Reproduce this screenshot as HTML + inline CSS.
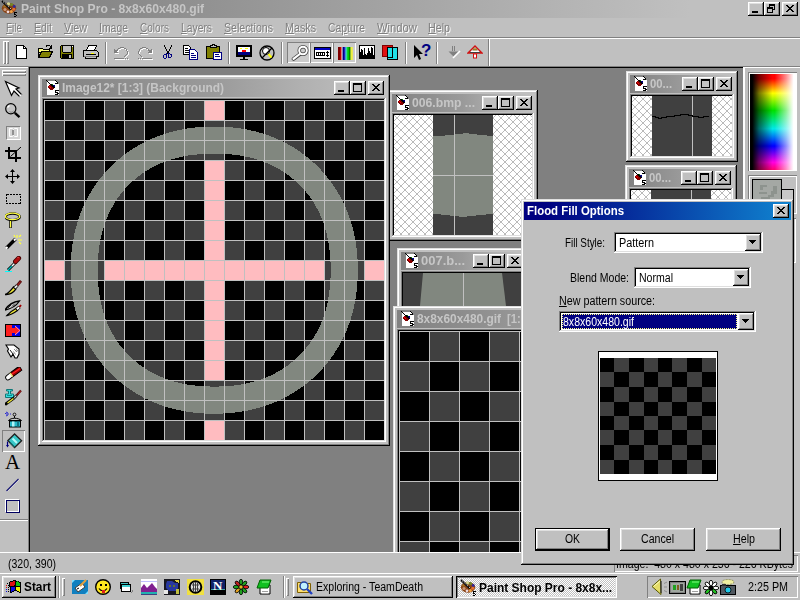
<!DOCTYPE html>
<html><head><meta charset="utf-8"><title>Paint Shop Pro</title>
<style>
html,body{margin:0;padding:0}
body{width:800px;height:600px;overflow:hidden;background:#c0c0c0;position:relative;font-family:"Liberation Sans",sans-serif;font-size:11px;color:#000}
div,span,svg{position:absolute;box-sizing:border-box}
.t{white-space:nowrap;line-height:13px;font-size:11px}
.b{font-weight:bold}
.dis{color:#808080;text-shadow:1px 1px 0 #fff}
u{text-decoration:underline}
</style></head><body>
<div style="left:0px;top:0px;width:800px;height:18px;background:linear-gradient(to right,#808080 0,#828282 40px,#c0c0c0 690px,#c0c0c0 800px)"></div>
<span class="t" style="left:21px;top:2px;font-size:12px;line-height:14px;font-weight:bold;transform-origin:0 0;transform:scaleX(1.0092);color:#c6c6c6">Paint Shop Pro - 8x8x60x480.gif</span>
<svg style="left:0px;top:0px" width="18" height="17" viewBox="0 0 18 17" shape-rendering="crispEdges" ><g shape-rendering="auto"><ellipse cx="9" cy="8.300" rx="7.200" ry="5.400" fill="#8a4416"/><circle cx="8.500" cy="4" r="1.700" fill="#d8d890"/><circle cx="11.500" cy="4.500" r="1.600" fill="#708828"/><circle cx="14.200" cy="6.500" r="1.400" fill="#3028a0"/><circle cx="13.800" cy="9.300" r="1.500" fill="#e87030"/><circle cx="11.300" cy="11.500" r="1.500" fill="#f0a040"/><circle cx="8" cy="11.800" r="1.400" fill="#f0dce0"/><circle cx="5" cy="9.500" r="1.600" fill="#c89878"/><circle cx="4.500" cy="6.500" r="1.300" fill="#a07020"/><path d="M2 1L11 9.500" stroke="#000" stroke-width="1.800"/><path d="M3 1.500L11.500 9.500" stroke="#fff" stroke-width="0.900" stroke-dasharray="1.200 1.200"/></g><rect x="14" y="12" width="3" height="1" fill="#000"/><rect x="14" y="13" width="1" height="1" fill="#000"/><rect x="14" y="14" width="2" height="1" fill="#000"/><rect x="16" y="15" width="1" height="1" fill="#000"/><rect x="14" y="16" width="2" height="1" fill="#000"/></svg>
<div style="left:748px;top:2px;width:16px;height:14px;background:#c0c0c0;box-shadow:inset -1px -1px 0 #000,inset 1px 1px 0 #fff,inset -2px -2px 0 #808080,inset 2px 2px 0 #dfdfdf"><div style="left:4px;top:9px;width:6px;height:2px;background:#000"></div></div>
<div style="left:764px;top:2px;width:16px;height:14px;background:#c0c0c0;box-shadow:inset -1px -1px 0 #000,inset 1px 1px 0 #fff,inset -2px -2px 0 #808080,inset 2px 2px 0 #dfdfdf"><div style="left:5px;top:2px;width:6px;height:6px;border:1px solid #000;border-top:2px solid #000"></div><div style="left:3px;top:5px;width:6px;height:6px;border:1px solid #000;border-top:2px solid #000;background:#c0c0c0"></div></div>
<div style="left:782px;top:2px;width:16px;height:14px;background:#c0c0c0;box-shadow:inset -1px -1px 0 #000,inset 1px 1px 0 #fff,inset -2px -2px 0 #808080,inset 2px 2px 0 #dfdfdf"><svg style="left:4px;top:3px" width="8" height="7" viewBox="0 0 8 7" shape-rendering="crispEdges" ><path d="M0 0h2v1h-2zM6 0h2v1h-2zM1 1h2v1h-2zM5 1h2v1h-2zM2 2h4v1h-4zM3 3h2v1h-2zM2 4h4v1h-4zM1 5h2v1h-2zM5 5h2v1h-2zM0 6h2v1h-2zM6 6h2v1h-2z" fill="#000"/></svg></div>
<span class="t dis" style="left:6px;top:21px;font-size:12px;line-height:14px;transform-origin:0 0;transform:scaleX(0.8271);"><u>F</u>ile</span>
<span class="t dis" style="left:34px;top:21px;font-size:12px;line-height:14px;transform-origin:0 0;transform:scaleX(0.8707);"><u>E</u>dit</span>
<span class="t dis" style="left:64px;top:21px;font-size:12px;line-height:14px;transform-origin:0 0;transform:scaleX(0.8916);"><u>V</u>iew</span>
<span class="t dis" style="left:99px;top:21px;font-size:12px;line-height:14px;transform-origin:0 0;transform:scaleX(0.8697);"><u>I</u>mage</span>
<span class="t dis" style="left:140px;top:21px;font-size:12px;line-height:14px;transform-origin:0 0;transform:scaleX(0.8360);"><u>C</u>olors</span>
<span class="t dis" style="left:181px;top:21px;font-size:12px;line-height:14px;transform-origin:0 0;transform:scaleX(0.8607);"><u>L</u>ayers</span>
<span class="t dis" style="left:224px;top:21px;font-size:12px;line-height:14px;transform-origin:0 0;transform:scaleX(0.8851);"><u>S</u>elections</span>
<span class="t dis" style="left:285px;top:21px;font-size:12px;line-height:14px;transform-origin:0 0;transform:scaleX(0.8941);"><u>M</u>asks</span>
<span class="t dis" style="left:328px;top:21px;font-size:12px;line-height:14px;transform-origin:0 0;transform:scaleX(0.8668);">Ca<u>p</u>ture</span>
<span class="t dis" style="left:377px;top:21px;font-size:12px;line-height:14px;transform-origin:0 0;transform:scaleX(0.9370);"><u>W</u>indow</span>
<span class="t dis" style="left:428px;top:21px;font-size:12px;line-height:14px;transform-origin:0 0;transform:scaleX(0.8911);"><u>H</u>elp</span>
<div style="left:0px;top:37px;width:800px;height:1px;background:#808080"></div>
<div style="left:0px;top:38px;width:800px;height:1px;background:#fff"></div>
<div style="left:3px;top:41px;width:3px;height:23px;background:#c0c0c0;box-shadow:inset 1px 1px 0 #fff,inset -1px -1px 0 #808080"></div>
<div style="left:6px;top:41px;width:3px;height:23px;background:#c0c0c0;box-shadow:inset 1px 1px 0 #fff,inset -1px -1px 0 #808080"></div>
<svg style="left:16px;top:45px" width="12" height="14" viewBox="0 0 12 14" shape-rendering="crispEdges" ><path d="M0.5 0.5h7l3 3v9.5h-10z" fill="#fff" stroke="#000"/><path d="M7.5 0.5v3h3" fill="none" stroke="#000"/></svg><svg style="left:37px;top:44px" width="16" height="15" viewBox="0 0 16 15" shape-rendering="crispEdges" ><path d="M1 4h4l1 1h6v3h-11z" fill="#ffff80" stroke="#000" stroke-width="1"/><path d="M1.5 13.5l3-6h11l-3 6z" fill="#808000" stroke="#000"/><path d="M1.5 13.5v-9" stroke="#000"/><path d="M9 2.5c2-2 4-2 5 1M14.5 1v3h-3" fill="none" stroke="#000"/></svg><svg style="left:60px;top:45px" width="14" height="14" viewBox="0 0 14 14" shape-rendering="crispEdges" ><rect x="1" y="0" width="13" height="1" fill="#000"/><rect x="0" y="1" width="1" height="1" fill="#000"/><rect x="1" y="1" width="1" height="1" fill="#808000"/><rect x="2" y="1" width="1" height="1" fill="#000"/><rect x="3" y="1" width="8" height="1" fill="#c0c0c0"/><rect x="11" y="1" width="1" height="1" fill="#000"/><rect x="12" y="1" width="1" height="1" fill="#fff"/><rect x="13" y="1" width="1" height="1" fill="#000"/><rect x="0" y="2" width="1" height="1" fill="#000"/><rect x="1" y="2" width="1" height="1" fill="#808000"/><rect x="2" y="2" width="1" height="1" fill="#000"/><rect x="3" y="2" width="8" height="1" fill="#c0c0c0"/><rect x="11" y="2" width="1" height="1" fill="#000"/><rect x="12" y="2" width="1" height="1" fill="#808000"/><rect x="13" y="2" width="1" height="1" fill="#000"/><rect x="0" y="3" width="1" height="1" fill="#000"/><rect x="1" y="3" width="1" height="1" fill="#808000"/><rect x="2" y="3" width="1" height="1" fill="#000"/><rect x="3" y="3" width="8" height="1" fill="#c0c0c0"/><rect x="11" y="3" width="1" height="1" fill="#000"/><rect x="12" y="3" width="1" height="1" fill="#808000"/><rect x="13" y="3" width="1" height="1" fill="#000"/><rect x="0" y="4" width="1" height="1" fill="#000"/><rect x="1" y="4" width="1" height="1" fill="#808000"/><rect x="2" y="4" width="1" height="1" fill="#000"/><rect x="3" y="4" width="8" height="1" fill="#c0c0c0"/><rect x="11" y="4" width="1" height="1" fill="#000"/><rect x="12" y="4" width="1" height="1" fill="#808000"/><rect x="13" y="4" width="1" height="1" fill="#000"/><rect x="0" y="5" width="1" height="1" fill="#000"/><rect x="1" y="5" width="1" height="1" fill="#808000"/><rect x="2" y="5" width="1" height="1" fill="#000"/><rect x="3" y="5" width="8" height="1" fill="#c0c0c0"/><rect x="11" y="5" width="1" height="1" fill="#000"/><rect x="12" y="5" width="1" height="1" fill="#808000"/><rect x="13" y="5" width="1" height="1" fill="#000"/><rect x="0" y="6" width="1" height="1" fill="#000"/><rect x="1" y="6" width="1" height="1" fill="#808000"/><rect x="2" y="6" width="1" height="1" fill="#000"/><rect x="3" y="6" width="8" height="1" fill="#c0c0c0"/><rect x="11" y="6" width="1" height="1" fill="#000"/><rect x="12" y="6" width="1" height="1" fill="#808000"/><rect x="13" y="6" width="1" height="1" fill="#000"/><rect x="0" y="7" width="1" height="1" fill="#000"/><rect x="1" y="7" width="2" height="1" fill="#808000"/><rect x="3" y="7" width="8" height="1" fill="#000"/><rect x="11" y="7" width="2" height="1" fill="#808000"/><rect x="13" y="7" width="1" height="1" fill="#000"/><rect x="0" y="8" width="1" height="1" fill="#000"/><rect x="1" y="8" width="12" height="1" fill="#808000"/><rect x="13" y="8" width="1" height="1" fill="#000"/><rect x="0" y="9" width="1" height="1" fill="#000"/><rect x="1" y="9" width="1" height="1" fill="#808000"/><rect x="2" y="9" width="10" height="1" fill="#000"/><rect x="12" y="9" width="1" height="1" fill="#808000"/><rect x="13" y="9" width="1" height="1" fill="#000"/><rect x="0" y="10" width="1" height="1" fill="#000"/><rect x="1" y="10" width="1" height="1" fill="#808000"/><rect x="2" y="10" width="7" height="1" fill="#000"/><rect x="9" y="10" width="2" height="1" fill="#c0c0c0"/><rect x="11" y="10" width="1" height="1" fill="#000"/><rect x="12" y="10" width="1" height="1" fill="#808000"/><rect x="13" y="10" width="1" height="1" fill="#000"/><rect x="0" y="11" width="1" height="1" fill="#000"/><rect x="1" y="11" width="1" height="1" fill="#808000"/><rect x="2" y="11" width="7" height="1" fill="#000"/><rect x="9" y="11" width="2" height="1" fill="#c0c0c0"/><rect x="11" y="11" width="1" height="1" fill="#000"/><rect x="12" y="11" width="1" height="1" fill="#808000"/><rect x="13" y="11" width="1" height="1" fill="#000"/><rect x="0" y="12" width="1" height="1" fill="#000"/><rect x="1" y="12" width="1" height="1" fill="#808000"/><rect x="2" y="12" width="7" height="1" fill="#000"/><rect x="9" y="12" width="2" height="1" fill="#c0c0c0"/><rect x="11" y="12" width="1" height="1" fill="#000"/><rect x="12" y="12" width="1" height="1" fill="#808000"/><rect x="13" y="12" width="1" height="1" fill="#000"/><rect x="1" y="13" width="13" height="1" fill="#000"/></svg><svg style="left:82px;top:45px" width="17" height="14" viewBox="0 0 17 14" shape-rendering="crispEdges" ><path d="M4.5 5.5l2-5h8l-2 5z" fill="#fff" stroke="#000"/><path d="M1.5 5.5h13l2 2v4h-2v2h-11v-2h-2z" fill="#c0c0c0" stroke="#000"/><path d="M3.5 9.5h10" stroke="#000"/><rect x="9" y="8" width="3" height="1" fill="#ffff00"/><path d="M2 11.5h12" stroke="#808080"/></svg><div style="left:105px;top:42px;width:1px;height:22px;background:#808080"></div><div style="left:106px;top:42px;width:1px;height:22px;background:#fff"></div><svg style="left:114px;top:47px" width="16" height="14" viewBox="0 0 16 14" shape-rendering="crispEdges" ><rect x="7" y="1" width="4" height="1" fill="#fff"/><rect x="5" y="2" width="2" height="1" fill="#fff"/><rect x="11" y="2" width="2" height="1" fill="#fff"/><rect x="1" y="3" width="1" height="1" fill="#fff"/><rect x="4" y="3" width="1" height="1" fill="#fff"/><rect x="13" y="3" width="1" height="1" fill="#fff"/><rect x="1" y="4" width="4" height="1" fill="#fff"/><rect x="13" y="4" width="1" height="1" fill="#fff"/><rect x="1" y="5" width="3" height="1" fill="#fff"/><rect x="14" y="5" width="1" height="1" fill="#fff"/><rect x="1" y="6" width="4" height="1" fill="#fff"/><rect x="14" y="6" width="1" height="1" fill="#fff"/><rect x="14" y="7" width="1" height="1" fill="#fff"/><rect x="13" y="8" width="1" height="1" fill="#fff"/><rect x="12" y="9" width="1" height="1" fill="#fff"/><rect x="11" y="10" width="1" height="1" fill="#fff"/><rect x="1" y="12" width="10" height="1" fill="#fff"/><rect x="12" y="12" width="1" height="1" fill="#fff"/><rect x="14" y="12" width="1" height="1" fill="#fff"/><rect x="6" y="0" width="4" height="1" fill="#808080"/><rect x="4" y="1" width="2" height="1" fill="#808080"/><rect x="10" y="1" width="2" height="1" fill="#808080"/><rect x="0" y="2" width="1" height="1" fill="#808080"/><rect x="3" y="2" width="1" height="1" fill="#808080"/><rect x="12" y="2" width="1" height="1" fill="#808080"/><rect x="0" y="3" width="4" height="1" fill="#808080"/><rect x="12" y="3" width="1" height="1" fill="#808080"/><rect x="0" y="4" width="3" height="1" fill="#808080"/><rect x="13" y="4" width="1" height="1" fill="#808080"/><rect x="0" y="5" width="4" height="1" fill="#808080"/><rect x="13" y="5" width="1" height="1" fill="#808080"/><rect x="13" y="6" width="1" height="1" fill="#808080"/><rect x="12" y="7" width="1" height="1" fill="#808080"/><rect x="11" y="8" width="1" height="1" fill="#808080"/><rect x="10" y="9" width="1" height="1" fill="#808080"/><rect x="0" y="11" width="10" height="1" fill="#808080"/><rect x="11" y="11" width="1" height="1" fill="#808080"/><rect x="13" y="11" width="1" height="1" fill="#808080"/></svg><svg style="left:138px;top:47px" width="16" height="14" viewBox="0 0 16 14" shape-rendering="crispEdges" ><rect x="5" y="1" width="4" height="1" fill="#fff"/><rect x="3" y="2" width="2" height="1" fill="#fff"/><rect x="9" y="2" width="2" height="1" fill="#fff"/><rect x="2" y="3" width="1" height="1" fill="#fff"/><rect x="11" y="3" width="1" height="1" fill="#fff"/><rect x="14" y="3" width="1" height="1" fill="#fff"/><rect x="2" y="4" width="1" height="1" fill="#fff"/><rect x="11" y="4" width="4" height="1" fill="#fff"/><rect x="1" y="5" width="1" height="1" fill="#fff"/><rect x="12" y="5" width="3" height="1" fill="#fff"/><rect x="1" y="6" width="1" height="1" fill="#fff"/><rect x="11" y="6" width="4" height="1" fill="#fff"/><rect x="1" y="7" width="1" height="1" fill="#fff"/><rect x="2" y="8" width="1" height="1" fill="#fff"/><rect x="3" y="9" width="1" height="1" fill="#fff"/><rect x="4" y="10" width="1" height="1" fill="#fff"/><rect x="1" y="12" width="1" height="1" fill="#fff"/><rect x="3" y="12" width="1" height="1" fill="#fff"/><rect x="5" y="12" width="10" height="1" fill="#fff"/><rect x="4" y="0" width="4" height="1" fill="#808080"/><rect x="2" y="1" width="2" height="1" fill="#808080"/><rect x="8" y="1" width="2" height="1" fill="#808080"/><rect x="1" y="2" width="1" height="1" fill="#808080"/><rect x="10" y="2" width="1" height="1" fill="#808080"/><rect x="13" y="2" width="1" height="1" fill="#808080"/><rect x="1" y="3" width="1" height="1" fill="#808080"/><rect x="10" y="3" width="4" height="1" fill="#808080"/><rect x="0" y="4" width="1" height="1" fill="#808080"/><rect x="11" y="4" width="3" height="1" fill="#808080"/><rect x="0" y="5" width="1" height="1" fill="#808080"/><rect x="10" y="5" width="4" height="1" fill="#808080"/><rect x="0" y="6" width="1" height="1" fill="#808080"/><rect x="1" y="7" width="1" height="1" fill="#808080"/><rect x="2" y="8" width="1" height="1" fill="#808080"/><rect x="3" y="9" width="1" height="1" fill="#808080"/><rect x="0" y="11" width="1" height="1" fill="#808080"/><rect x="2" y="11" width="1" height="1" fill="#808080"/><rect x="4" y="11" width="10" height="1" fill="#808080"/></svg><svg style="left:163px;top:45px" width="10" height="14" viewBox="0 0 10 14" shape-rendering="crispEdges" ><rect x="1" y="0" width="1" height="1" fill="#000"/><rect x="8" y="0" width="1" height="1" fill="#000"/><rect x="1" y="1" width="1" height="1" fill="#000"/><rect x="8" y="1" width="1" height="1" fill="#000"/><rect x="2" y="2" width="1" height="1" fill="#000"/><rect x="7" y="2" width="1" height="1" fill="#000"/><rect x="2" y="3" width="1" height="1" fill="#000"/><rect x="7" y="3" width="1" height="1" fill="#000"/><rect x="3" y="4" width="1" height="1" fill="#000"/><rect x="6" y="4" width="1" height="1" fill="#000"/><rect x="3" y="5" width="1" height="1" fill="#000"/><rect x="6" y="5" width="1" height="1" fill="#000"/><rect x="4" y="6" width="2" height="1" fill="#000"/><rect x="4" y="7" width="2" height="1" fill="#000"/><rect x="3" y="8" width="1" height="1" fill="#000080"/><rect x="4" y="8" width="1" height="1" fill="#000"/><rect x="5" y="8" width="2" height="1" fill="#000080"/><rect x="1" y="9" width="3" height="1" fill="#000080"/><rect x="5" y="9" width="1" height="1" fill="#000080"/><rect x="7" y="9" width="2" height="1" fill="#000080"/><rect x="0" y="10" width="1" height="1" fill="#000080"/><rect x="3" y="10" width="1" height="1" fill="#000080"/><rect x="5" y="10" width="1" height="1" fill="#000080"/><rect x="8" y="10" width="1" height="1" fill="#000080"/><rect x="0" y="11" width="1" height="1" fill="#000080"/><rect x="3" y="11" width="1" height="1" fill="#000080"/><rect x="5" y="11" width="1" height="1" fill="#000080"/><rect x="8" y="11" width="1" height="1" fill="#000080"/><rect x="0" y="12" width="1" height="1" fill="#000080"/><rect x="3" y="12" width="1" height="1" fill="#000080"/><rect x="5" y="12" width="3" height="1" fill="#000080"/><rect x="1" y="13" width="2" height="1" fill="#000080"/></svg><svg style="left:183px;top:45px" width="16" height="15" viewBox="0 0 16 15" shape-rendering="crispEdges" ><path d="M0.5 0.5h5l2 2v7h-7z" fill="#fff" stroke="#000"/><path d="M2 3.5h3M2 5.5h4M2 7.5h4" stroke="#000"/><path d="M6.500 4.500h5l3 3v6.500h-8z" fill="#fff" stroke="#000080"/><path d="M8 8.500h3M8 10.500h5M8 12.500h5" stroke="#000080"/></svg><svg style="left:206px;top:44px" width="16" height="16" viewBox="0 0 16 16" shape-rendering="crispEdges" ><rect x="0.5" y="2.5" width="13" height="12" fill="#808000" stroke="#000"/><path d="M4 3.500h6v-2h-2v-1h-2v1h-2z" fill="#c0c0c0" stroke="#000"/><rect x="7.500" y="8.500" width="8" height="6.500" fill="#fff" stroke="#000080"/><path d="M9 10.500h4M9 12.500h5" stroke="#000080"/></svg><div style="left:228px;top:42px;width:1px;height:22px;background:#808080"></div><div style="left:229px;top:42px;width:1px;height:22px;background:#fff"></div><svg style="left:236px;top:45px" width="17" height="16" viewBox="0 0 17 16" shape-rendering="crispEdges" ><rect x="0.5" y="0.5" width="15" height="11" fill="#000" stroke="#000"/><rect x="2" y="2" width="12" height="5" fill="#fff"/><rect x="2" y="7" width="12" height="3" fill="#000080"/><rect x="6" y="5" width="4" height="2" fill="#ff0000"/><rect x="4" y="3" width="2" height="1" fill="#ffff00"/><rect x="9" y="3" width="3" height="1" fill="#ffff00"/><rect x="7" y="12" width="2" height="2" fill="#000"/><rect x="4" y="14" width="8" height="1" fill="#000"/></svg><svg style="left:259px;top:45px" width="17" height="16" viewBox="0 0 17 16" shape-rendering="crispEdges" ><circle cx="8" cy="8" r="7" fill="#c0c0c0" stroke="#000" stroke-width="1.3" shape-rendering="auto"/><circle cx="7" cy="6" r="3.500" fill="#fff" stroke="#000" shape-rendering="auto"/><path d="M9.500 9l3 3.500" stroke="#ffff00" stroke-width="2" shape-rendering="auto"/><path d="M3 13L13 3" stroke="#000" stroke-width="1.200" shape-rendering="auto"/></svg><div style="left:281px;top:42px;width:1px;height:22px;background:#808080"></div><div style="left:282px;top:42px;width:1px;height:22px;background:#fff"></div><div style="left:287px;top:42px;width:23px;height:21px;background:#cccccc;box-shadow:inset 1px 1px 0 #808080,inset -1px -1px 0 #fff"></div><div style="left:310px;top:42px;width:23px;height:21px;background:#cccccc;box-shadow:inset 1px 1px 0 #808080,inset -1px -1px 0 #fff"></div><div style="left:333px;top:42px;width:23px;height:21px;background:#cccccc;box-shadow:inset 1px 1px 0 #808080,inset -1px -1px 0 #fff"></div><svg style="left:291px;top:45px" width="18" height="16" viewBox="0 0 18 16" shape-rendering="crispEdges" ><g shape-rendering="auto"><path d="M8.500 9.500L2.500 14" stroke="#404040" stroke-width="3.600" stroke-linecap="round"/><circle cx="12" cy="5.500" r="3.800" fill="none" stroke="#404040" stroke-width="3.400"/><circle cx="12" cy="5.500" r="3.800" fill="none" stroke="#fff" stroke-width="2"/><path d="M8.800 9L2.500 13.800" stroke="#fff" stroke-width="2.200" stroke-linecap="round"/></g></svg><svg style="left:314px;top:47px" width="17" height="12" viewBox="0 0 17 12" shape-rendering="crispEdges" ><rect x="0.5" y="0.5" width="16" height="11" fill="#fff" stroke="#000"/><rect x="1" y="1" width="15" height="2" fill="#0000c0"/><rect x="2.500" y="5.500" width="8" height="3" fill="#fff" stroke="#000"/><rect x="4" y="6" width="1" height="2" fill="#000"/><rect x="6" y="6" width="1" height="2" fill="#000"/><rect x="8" y="6" width="1" height="2" fill="#000"/><path d="M13.500 4v6M12 5.500h3M12 8.500h3" stroke="#000"/></svg><svg style="left:338px;top:47px" width="15" height="13" viewBox="0 0 15 13" shape-rendering="crispEdges" ><g shape-rendering="auto"><rect x="0" y="0" width="2.3" height="13" fill="#800000"/><rect x="2" y="0" width="2.3" height="13" fill="#c00000"/><rect x="4" y="0" width="2.3" height="13" fill="#000080"/><rect x="6" y="0" width="1.8" height="13" fill="#2020c0"/><rect x="7.5" y="0" width="1.8" height="13" fill="#40e0e8"/><rect x="9" y="0" width="2.3" height="13" fill="#00c800"/><rect x="11" y="0" width="1.8" height="13" fill="#008000"/><rect x="12.5" y="0" width="2.3" height="13" fill="#f0f040"/><path d="M3.500 0l1 1l-1 1l1 1l-1 1l1 1l-1 1l1 1l-1 1l1 1l-1 1l1 1l-1 1l1 1" fill="none" stroke="#ffffff" stroke-width="1"/><path d="M8.500 0l1 1l-1 1l1 1l-1 1l1 1l-1 1l1 1l-1 1l1 1l-1 1l1 1l-1 1l1 1" fill="none" stroke="#20d060" stroke-width="1"/></g></svg><svg style="left:359px;top:45px" width="16" height="14" viewBox="0 0 16 14" shape-rendering="crispEdges" ><rect x="0" y="0" width="16" height="14" fill="#000"/><path d="M1 1h14v9h-1v-7h-1v-1h-1v6h-1v-2h-1v-3h-1v5h-1v2h-1v-1h-1v-6h-1v7h-1v-5h-1v-1h-1v3h-1z" fill="#fff"/></svg><svg style="left:382px;top:45px" width="17" height="17" viewBox="0 0 17 17" shape-rendering="crispEdges" ><rect x="0.5" y="0.5" width="10" height="11" fill="#e01010" stroke="#800000"/><rect x="5.500" y="2.500" width="10" height="12" fill="#20e0e8" stroke="#000"/><path d="M10.500 3v9h-5" stroke="#000" fill="none"/></svg><div style="left:405px;top:42px;width:1px;height:22px;background:#808080"></div><div style="left:406px;top:42px;width:1px;height:22px;background:#fff"></div><svg style="left:414px;top:45px" width="10" height="16" viewBox="0 0 10 16" shape-rendering="crispEdges" ><path d="M0 0v13l3-3l2 5l2-1l-2-5h4z" fill="#000" shape-rendering="auto"/></svg><span class="t" style="left:421px;top:42px;font-size:17px;line-height:18px;font-weight:bold;color:#000080">?</span><div style="left:436px;top:42px;width:1px;height:22px;background:#808080"></div><div style="left:437px;top:42px;width:1px;height:22px;background:#fff"></div><svg style="left:447px;top:46px" width="16" height="14" viewBox="0 0 16 14" shape-rendering="crispEdges" ><g shape-rendering="auto"><path d="M5.500 0v5M7.500 0v5" stroke="#808080"/><path d="M1.500 5.500h10l-5 5z" fill="#808080"/><path d="M6 12l7-7" stroke="#fff" stroke-width="1.600"/></g></svg><svg style="left:467px;top:45px" width="16" height="15" viewBox="0 0 16 15" shape-rendering="crispEdges" ><g shape-rendering="auto"><path d="M8 1l7 7h-14z" fill="#c0c0c0" stroke="#d01010" stroke-width="1.400"/><path d="M6 4.500h4" stroke="#a08020" stroke-width="2"/><path d="M4 6.500h8" stroke="#fff" stroke-width="1.400"/><path d="M3 7.500h10" stroke="#404040"/><rect x="6.500" y="9" width="3" height="4" fill="#fff" stroke="#d01010"/></g></svg><div style="left:488px;top:39px;width:1px;height:27px;background:#808080"></div><div style="left:489px;top:39px;width:1px;height:27px;background:#fff"></div>
<div style="left:0px;top:66px;width:800px;height:1px;background:#808080"></div>
<div style="left:0px;top:67px;width:29px;height:1px;background:#fff"></div>
<div style="left:2px;top:70px;width:24px;height:3px;background:#c0c0c0;box-shadow:inset 1px 1px 0 #fff,inset -1px -1px 0 #808080"></div>
<div style="left:2px;top:73px;width:24px;height:3px;background:#c0c0c0;box-shadow:inset 1px 1px 0 #fff,inset -1px -1px 0 #808080"></div>
<svg style="left:4px;top:80px" width="19" height="18" viewBox="0 0 19 18" shape-rendering="crispEdges" ><path d="M1.500 1.500L15 8L12 9L17.500 14.500L15.500 16.500L10 11L7.500 15.500Z" fill="#fff" stroke="#000" stroke-width="1.200" shape-rendering="auto"/><path d="M15.500 16.500l2-2" stroke="#fff" stroke-width="1.400" shape-rendering="auto"/></svg><svg style="left:5px;top:103px" width="16" height="17" viewBox="0 0 16 17" shape-rendering="crispEdges" ><circle cx="5.800" cy="5.700" r="5.100" fill="#c4c4c4" stroke="#000" stroke-width="1.200" shape-rendering="auto"/><path d="M2.500 4.500l2-2" stroke="#fff" stroke-width="1.200" shape-rendering="auto"/><path d="M4.500 8.500c1 1 3 1 4-0.500" stroke="#808080" fill="none" shape-rendering="auto"/><path d="M9.800 9.800l4.700 4.400" stroke="#000" stroke-width="2.400" shape-rendering="auto"/></svg><div style="left:6px;top:126px;width:15px;height:14px;border:1px solid #fff;border-top-color:#808080;border-left-color:#808080;background:#d4d4d4"></div><svg style="left:8px;top:128px" width="11" height="10" viewBox="0 0 11 10" shape-rendering="crispEdges" ><path d="M1.500 0.500h3l1 1l1-1h3v8h-3l-1-1l-1 1h-3z" fill="none" stroke="#fff" shape-rendering="auto"/><rect x="4" y="2" width="2" height="5" fill="#909090"/></svg><svg style="left:5px;top:147px" width="17" height="16" viewBox="0 0 17 16" shape-rendering="crispEdges" ><path d="M0 4h12M4 0v11M3 11h13M11 3v11.500" stroke="#000" stroke-width="2"/><path d="M5.500 9.500L16 0" stroke="#000" stroke-width="1" shape-rendering="auto"/></svg><svg style="left:5px;top:169px" width="16" height="16" viewBox="0 0 16 16" shape-rendering="crispEdges" ><path d="M7.500 1v13M1 7.500h13" stroke="#000" stroke-width="1.400"/><path d="M7.500 0l-2.500 3h5zM7.500 15l-2.500-3h5zM0 7.500l3-2.500v5zM15 7.500l-3-2.500v5z" fill="#000" shape-rendering="auto"/></svg><svg style="left:6px;top:194px" width="15" height="10" viewBox="0 0 15 10" shape-rendering="crispEdges" ><rect x="0.5" y="0.5" width="14" height="9" fill="none" stroke="#000" stroke-dasharray="2 1"/></svg><svg style="left:5px;top:212px" width="17" height="17" viewBox="0 0 17 17" shape-rendering="crispEdges" ><ellipse cx="7.600" cy="4.800" rx="7.200" ry="3.300" fill="none" stroke="#000" stroke-width="2.400" shape-rendering="auto"/><ellipse cx="7.600" cy="4.400" rx="7.200" ry="3.300" fill="none" stroke="#ffff40" stroke-width="1.300" shape-rendering="auto"/><path d="M5.500 9v7" stroke="#000" stroke-width="2.600" shape-rendering="auto"/><path d="M5.500 9v6.500" stroke="#ffff40" stroke-width="1.200" shape-rendering="auto"/></svg><svg style="left:5px;top:234px" width="18" height="17" viewBox="0 0 18 17" shape-rendering="crispEdges" ><path d="M1.500 14l9-9" stroke="#000" stroke-width="3.400" shape-rendering="auto"/><path d="M1 14.500l1.500-1.500M9 6.500l1.500-1.500" stroke="#fff" stroke-width="2" shape-rendering="auto"/><path d="M12 1v3M14 3l2-2M13 6h4M14 8l2 2M9 1l1 2" stroke="#ffff40" stroke-width="1.200" shape-rendering="auto"/></svg><svg style="left:5px;top:256px" width="18" height="17" viewBox="0 0 18 17" shape-rendering="crispEdges" ><path d="M3 14l8-8" stroke="#000" stroke-width="3" shape-rendering="auto"/><path d="M3 14l4-4" stroke="#00c0c0" stroke-width="1.400" shape-rendering="auto"/><path d="M7 10l3-3" stroke="#fff" stroke-width="1.400" shape-rendering="auto"/><path d="M10.500 5.500l3.200-3.200" stroke="#400000" stroke-width="4.800" stroke-linecap="round" shape-rendering="auto"/><path d="M10.500 5.500l3.200-3.200" stroke="#b01010" stroke-width="3.200" stroke-linecap="round" shape-rendering="auto"/><path d="M12.500 2l1-1" stroke="#ff6060" stroke-width="1" shape-rendering="auto"/><path d="M0 15.500h7" stroke="#00ffff"/></svg><svg style="left:5px;top:280px" width="18" height="16" viewBox="0 0 18 16" shape-rendering="crispEdges" ><g shape-rendering="auto"><path d="M0 14.500C3.500 13.500 5.500 10.500 8.500 7L10.800 9.200C8.500 12.500 5 15 0 14.500Z" fill="#f0e838" stroke="#000" stroke-width="1.300"/><path d="M9.600 8.100L12.300 5.400" stroke="#000" stroke-width="3.400"/><path d="M9.800 7.900L12.100 5.600" stroke="#f0f0f0" stroke-width="1.800"/><path d="M12.300 5.400L16 0.800" stroke="#501010" stroke-width="2.800"/><path d="M12.800 5L15.600 1.600" stroke="#c02020" stroke-width="1"/></g></svg><svg style="left:5px;top:300px" width="18" height="18" viewBox="0 0 18 18" shape-rendering="crispEdges" ><g shape-rendering="auto"><path d="M0 10C3 5 8 2 14.500 1C11 6 6 9 0 10Z" fill="#d4d4d4" stroke="#000" stroke-width="1.300"/><path d="M3 8l3-3M7 6.500l3-3" stroke="#000" stroke-width="0.800"/><path d="M2 15.500C5 12 8 10 11 8.500L12.500 10.500C9 13 6 15 2 15.500Z" fill="#f0e838" stroke="#000" stroke-width="1.300"/><path d="M11.500 9.500L14.500 7" stroke="#000" stroke-width="3.400"/><path d="M11.800 9.300L14.300 7.200" stroke="#fff" stroke-width="1.800"/><path d="M14.500 7L16 5" stroke="#a00000" stroke-width="1.800"/></g></svg><svg style="left:5px;top:324px" width="16" height="13" viewBox="0 0 16 13" shape-rendering="crispEdges" ><rect x="0.5" y="0.5" width="15" height="12" fill="#0000e0" stroke="#000"/><path d="M1 1h6v3h3v-2l5 4.500l-5 4.500v-2h-3v3h-6z" fill="#ff2020"/><path d="M10 2l5 4.500l-5 4.500" fill="none" stroke="#ff80c0" shape-rendering="auto"/></svg><svg style="left:5px;top:344px" width="16" height="16" viewBox="0 0 16 16" shape-rendering="crispEdges" ><g shape-rendering="auto"><path d="M1 1L9 1L14 5L14 10L12 14L10 14L8 10L6 13L2.500 7L3.500 5Z" fill="#fff" stroke="#000" stroke-width="1.100"/><path d="M9 5l3 3M11 4.500l2 3M8.500 7.500l2 3M10.500 6l1 2" stroke="#808080" stroke-width="0.900"/><path d="M5 6l3 4" stroke="#000" stroke-width="0.900"/></g></svg><svg style="left:5px;top:367px" width="18" height="15" viewBox="0 0 18 15" shape-rendering="crispEdges" ><g shape-rendering="auto"><path d="M3 10.500L13.500 2.500" stroke="#000" stroke-width="5.600" stroke-linecap="round"/><path d="M6.500 7.800L16 1.200" stroke="#000" stroke-width="5"/><path d="M6.500 7.800L15.500 1.500" stroke="#a00000" stroke-width="3.600"/><path d="M7 7L15 1.500" stroke="#ff2020" stroke-width="1.200"/><path d="M3 10.500L5.500 8.600" stroke="#fff" stroke-width="3.800" stroke-linecap="round"/><path d="M5 5.800l2.800 3.800" stroke="#e8e060" stroke-width="1.200"/></g></svg><svg style="left:5px;top:389px" width="18" height="17" viewBox="0 0 18 17" shape-rendering="crispEdges" ><g shape-rendering="auto"><path d="M1.500 0.500h6v1.500h-2v3h3v3.500h-8v-3.500h3v-3h-2z" fill="#38e0e0" stroke="#107878" stroke-width="1"/><path d="M2 6.500h5" stroke="#109090" stroke-width="1"/><path d="M0 15.500L9 9" stroke="#000" stroke-width="3"/><path d="M2.500 14L8.500 9.500" stroke="#f0e838" stroke-width="1.400"/><path d="M9 9L11.500 6.500" stroke="#000" stroke-width="2.600"/><path d="M9.300 8.700L11.300 6.700" stroke="#e0e0e0" stroke-width="1.200"/><path d="M11.500 6.500L16 1.500" stroke="#601010" stroke-width="2.200"/><path d="M12.500 5.500L15.500 2" stroke="#c02020" stroke-width="0.900"/></g></svg><svg style="left:5px;top:411px" width="18" height="17" viewBox="0 0 18 17" shape-rendering="crispEdges" ><g shape-rendering="auto"><path d="M1 1l2 1M1 3h3M1 5l2-1M0 2.500h1M5 3h1" stroke="#2828d0" stroke-width="1"/><circle cx="9.500" cy="3.500" r="1.400" fill="#d0d0d0" stroke="#000" stroke-width="0.900"/><path d="M9.500 5v2" stroke="#000"/><path d="M3.500 9.500C6 6.500 13 6.500 16.500 9.500Z" fill="#c8c8c8" stroke="#000" stroke-width="1"/><rect x="4.500" y="10" width="11" height="6" fill="#28b8c8" stroke="#000" stroke-width="1"/><rect x="7" y="10.500" width="2.500" height="5" fill="#b0f4f8"/><rect x="12" y="10.500" width="2" height="5" fill="#107888"/></g></svg><div style="left:2px;top:430px;width:23px;height:22px;background:#c0c0c0;box-shadow:inset 1px 1px 0 #808080,inset -1px -1px 0 #fff"></div><svg style="left:5px;top:433px" width="18" height="17" viewBox="0 0 18 17" shape-rendering="crispEdges" ><g shape-rendering="auto"><path d="M9.600 1L16.600 7.800L9.600 14.500L2.900 7.500Z" fill="#38c8c8" stroke="#202020" stroke-width="1.300"/><path d="M7.500 5.500l4.500 4.500" stroke="#b8f8f8" stroke-width="2"/><path d="M5 9.500l4.500 4.500" stroke="#107070" stroke-width="1.200"/><path d="M2.500 8.500v4.500" stroke="#000080" stroke-width="1.200"/><path d="M1 12l1.500 2.500l1.500-2.500z" fill="#000080"/></g></svg><span class="t" style="left:5px;top:451px;font-family:'Liberation Serif',serif;font-size:21px;line-height:22px;color:#000">A</span><svg style="left:6px;top:478px" width="14" height="14" viewBox="0 0 14 14" shape-rendering="crispEdges" ><path d="M1 13.500l12-12" stroke="#fff" stroke-width="1" shape-rendering="auto"/><path d="M0.500 13l12-12" stroke="#101070" stroke-width="1.100" shape-rendering="auto"/></svg><div style="left:6px;top:500px;width:14px;height:13px;border:1px solid #000060;box-shadow:inset -1px -1px 0 #fff, -1px -1px 0 #fff;background:#c0c0c0"></div>
<div style="left:0px;top:519px;width:28px;height:1px;background:#808080"></div>
<div style="left:0px;top:520px;width:28px;height:1px;background:#fff"></div>
<div style="left:28px;top:66px;width:716px;height:486px;background:#808080;overflow:hidden;border-left:1px solid #808080;border-top:1px solid #808080"><div id="mdi" style="left:0;top:0;width:716px;height:486px;border-left:1px solid #000;border-top:1px solid #000"></div></div>
<div style="left:743px;top:67px;width:1px;height:485px;background:#fff"></div>
<div style="left:388px;top:90px;width:150px;height:151px;background:#c0c0c0;box-shadow:inset -1px -1px 0 #000,inset 1px 1px 0 #dfdfdf,inset -2px -2px 0 #808080,inset 2px 2px 0 #fff"></div><div style="left:392px;top:94px;width:142px;height:18px;background:linear-gradient(to right,#828282 0,#9a9a9a 50%,#b0b0b0 75%,#c2c2c2 100%)"></div><svg style="left:394px;top:95px" width="16" height="16" viewBox="0 0 16 16" shape-rendering="crispEdges" ><rect x="2" y="0" width="1" height="1" fill="#000"/><rect x="11" y="0" width="1" height="1" fill="#000"/><rect x="3" y="1" width="1" height="1" fill="#000"/><rect x="4" y="1" width="8" height="1" fill="#fff"/><rect x="12" y="1" width="1" height="1" fill="#000"/><rect x="3" y="2" width="1" height="1" fill="#fff"/><rect x="4" y="2" width="1" height="1" fill="#000"/><rect x="5" y="2" width="8" height="1" fill="#fff"/><rect x="13" y="2" width="1" height="1" fill="#000"/><rect x="3" y="3" width="2" height="1" fill="#fff"/><rect x="5" y="3" width="1" height="1" fill="#000"/><rect x="6" y="3" width="5" height="1" fill="#fff"/><rect x="11" y="3" width="3" height="1" fill="#000"/><rect x="3" y="4" width="3" height="1" fill="#fff"/><rect x="6" y="4" width="2" height="1" fill="#000"/><rect x="8" y="4" width="1" height="1" fill="#008000"/><rect x="9" y="4" width="6" height="1" fill="#fff"/><rect x="3" y="5" width="2" height="1" fill="#fff"/><rect x="5" y="5" width="2" height="1" fill="#800000"/><rect x="7" y="5" width="2" height="1" fill="#000"/><rect x="9" y="5" width="2" height="1" fill="#000080"/><rect x="11" y="5" width="4" height="1" fill="#fff"/><rect x="3" y="6" width="1" height="1" fill="#fff"/><rect x="4" y="6" width="1" height="1" fill="#800000"/><rect x="5" y="6" width="1" height="1" fill="#ff0000"/><rect x="6" y="6" width="2" height="1" fill="#800000"/><rect x="8" y="6" width="2" height="1" fill="#000"/><rect x="10" y="6" width="1" height="1" fill="#000080"/><rect x="11" y="6" width="4" height="1" fill="#fff"/><rect x="3" y="7" width="1" height="1" fill="#fff"/><rect x="4" y="7" width="2" height="1" fill="#800000"/><rect x="6" y="7" width="1" height="1" fill="#ff0000"/><rect x="7" y="7" width="2" height="1" fill="#800000"/><rect x="9" y="7" width="2" height="1" fill="#000"/><rect x="11" y="7" width="4" height="1" fill="#fff"/><rect x="3" y="8" width="2" height="1" fill="#fff"/><rect x="5" y="8" width="5" height="1" fill="#800000"/><rect x="10" y="8" width="5" height="1" fill="#fff"/><rect x="3" y="9" width="3" height="1" fill="#fff"/><rect x="6" y="9" width="3" height="1" fill="#800000"/><rect x="9" y="9" width="6" height="1" fill="#fff"/><rect x="3" y="10" width="8" height="1" fill="#fff"/><rect x="11" y="10" width="4" height="1" fill="#000"/><rect x="3" y="11" width="8" height="1" fill="#fff"/><rect x="11" y="11" width="1" height="1" fill="#000"/><rect x="12" y="11" width="3" height="1" fill="#fff"/><rect x="3" y="12" width="8" height="1" fill="#fff"/><rect x="11" y="12" width="3" height="1" fill="#000"/><rect x="14" y="12" width="1" height="1" fill="#fff"/><rect x="3" y="13" width="10" height="1" fill="#fff"/><rect x="13" y="13" width="2" height="1" fill="#000"/><rect x="3" y="14" width="8" height="1" fill="#fff"/><rect x="11" y="14" width="3" height="1" fill="#000"/><rect x="14" y="14" width="1" height="1" fill="#fff"/></svg><span class="t" style="left:412px;top:96px;font-size:12px;line-height:14px;font-weight:bold;transform-origin:0 0;transform:scaleX(1.0164);color:#c6c6c6">006.bmp ...</span><div style="left:516px;top:96px;width:16px;height:14px;background:#c0c0c0;box-shadow:inset -1px -1px 0 #000,inset 1px 1px 0 #fff,inset -2px -2px 0 #808080,inset 2px 2px 0 #dfdfdf"><svg style="left:4px;top:3px" width="8" height="7" viewBox="0 0 8 7" shape-rendering="crispEdges" ><path d="M0 0h2v1h-2zM6 0h2v1h-2zM1 1h2v1h-2zM5 1h2v1h-2zM2 2h4v1h-4zM3 3h2v1h-2zM2 4h4v1h-4zM1 5h2v1h-2zM5 5h2v1h-2zM0 6h2v1h-2zM6 6h2v1h-2z" fill="#000"/></svg></div><div style="left:498px;top:96px;width:16px;height:14px;background:#c0c0c0;box-shadow:inset -1px -1px 0 #000,inset 1px 1px 0 #fff,inset -2px -2px 0 #808080,inset 2px 2px 0 #dfdfdf"><div style="left:3px;top:2px;width:9px;height:9px;border:1px solid #000;border-top:2px solid #000"></div></div><div style="left:482px;top:96px;width:16px;height:14px;background:#c0c0c0;box-shadow:inset -1px -1px 0 #000,inset 1px 1px 0 #fff,inset -2px -2px 0 #808080,inset 2px 2px 0 #dfdfdf"><div style="left:4px;top:9px;width:6px;height:2px;background:#000"></div></div><div style="left:392px;top:113px;width:142px;height:124px;background:#fff;box-shadow:inset -1px -1px 0 #fff,inset 1px 1px 0 #808080,inset -2px -2px 0 #dfdfdf,inset 2px 2px 0 #000"></div><svg style="left:394px;top:115px" width="138" height="120" viewBox="0 0 138 120" shape-rendering="crispEdges" ><defs><pattern id="h1" x="7" y="7" width="8" height="8" patternUnits="userSpaceOnUse"><rect x="0" y="0" width="1" height="1" fill="#bababa"/><rect x="7" y="0" width="1" height="1" fill="#bababa"/><rect x="1" y="1" width="1" height="1" fill="#bababa"/><rect x="6" y="1" width="1" height="1" fill="#bababa"/><rect x="2" y="2" width="1" height="1" fill="#bababa"/><rect x="5" y="2" width="1" height="1" fill="#bababa"/><rect x="3" y="3" width="1" height="1" fill="#bababa"/><rect x="4" y="3" width="1" height="1" fill="#bababa"/><rect x="3" y="4" width="1" height="1" fill="#bababa"/><rect x="4" y="4" width="1" height="1" fill="#bababa"/><rect x="2" y="5" width="1" height="1" fill="#bababa"/><rect x="5" y="5" width="1" height="1" fill="#bababa"/><rect x="1" y="6" width="1" height="1" fill="#bababa"/><rect x="6" y="6" width="1" height="1" fill="#bababa"/><rect x="0" y="7" width="1" height="1" fill="#bababa"/><rect x="7" y="7" width="1" height="1" fill="#bababa"/></pattern></defs><rect width="138" height="120" fill="#fff"/><rect width="138" height="120" fill="url(#h1)"/></svg><svg style="left:433px;top:115px" width="60" height="120" viewBox="0 0 60 120" shape-rendering="crispEdges" ><rect x="0" y="0" width="60" height="120" fill="#81877f"/><path d="M0 0h60v21h-6v-1h-10v-1h-8v-1h-6v1h-8v1h-10v1h-12z" fill="#404040"/><path d="M0 120h60v-21h-7v1h-10v1h-9v1h-8v-1h-9v-1h-9v-1h-8z" fill="#404040"/><rect x="21" y="0" width="1" height="120" fill="#c0c0c0"/><rect x="0" y="60" width="60" height="1" fill="#c0c0c0"/></svg>
<div style="left:397px;top:248px;width:132px;height:64px;background:#c0c0c0;box-shadow:inset -1px -1px 0 #000,inset 1px 1px 0 #dfdfdf,inset -2px -2px 0 #808080,inset 2px 2px 0 #fff"></div><div style="left:401px;top:252px;width:124px;height:18px;background:linear-gradient(to right,#828282 0,#9a9a9a 50%,#b0b0b0 75%,#c2c2c2 100%)"></div><svg style="left:403px;top:253px" width="16" height="16" viewBox="0 0 16 16" shape-rendering="crispEdges" ><rect x="2" y="0" width="1" height="1" fill="#000"/><rect x="11" y="0" width="1" height="1" fill="#000"/><rect x="3" y="1" width="1" height="1" fill="#000"/><rect x="4" y="1" width="8" height="1" fill="#fff"/><rect x="12" y="1" width="1" height="1" fill="#000"/><rect x="3" y="2" width="1" height="1" fill="#fff"/><rect x="4" y="2" width="1" height="1" fill="#000"/><rect x="5" y="2" width="8" height="1" fill="#fff"/><rect x="13" y="2" width="1" height="1" fill="#000"/><rect x="3" y="3" width="2" height="1" fill="#fff"/><rect x="5" y="3" width="1" height="1" fill="#000"/><rect x="6" y="3" width="5" height="1" fill="#fff"/><rect x="11" y="3" width="3" height="1" fill="#000"/><rect x="3" y="4" width="3" height="1" fill="#fff"/><rect x="6" y="4" width="2" height="1" fill="#000"/><rect x="8" y="4" width="1" height="1" fill="#008000"/><rect x="9" y="4" width="6" height="1" fill="#fff"/><rect x="3" y="5" width="2" height="1" fill="#fff"/><rect x="5" y="5" width="2" height="1" fill="#800000"/><rect x="7" y="5" width="2" height="1" fill="#000"/><rect x="9" y="5" width="2" height="1" fill="#000080"/><rect x="11" y="5" width="4" height="1" fill="#fff"/><rect x="3" y="6" width="1" height="1" fill="#fff"/><rect x="4" y="6" width="1" height="1" fill="#800000"/><rect x="5" y="6" width="1" height="1" fill="#ff0000"/><rect x="6" y="6" width="2" height="1" fill="#800000"/><rect x="8" y="6" width="2" height="1" fill="#000"/><rect x="10" y="6" width="1" height="1" fill="#000080"/><rect x="11" y="6" width="4" height="1" fill="#fff"/><rect x="3" y="7" width="1" height="1" fill="#fff"/><rect x="4" y="7" width="2" height="1" fill="#800000"/><rect x="6" y="7" width="1" height="1" fill="#ff0000"/><rect x="7" y="7" width="2" height="1" fill="#800000"/><rect x="9" y="7" width="2" height="1" fill="#000"/><rect x="11" y="7" width="4" height="1" fill="#fff"/><rect x="3" y="8" width="2" height="1" fill="#fff"/><rect x="5" y="8" width="5" height="1" fill="#800000"/><rect x="10" y="8" width="5" height="1" fill="#fff"/><rect x="3" y="9" width="3" height="1" fill="#fff"/><rect x="6" y="9" width="3" height="1" fill="#800000"/><rect x="9" y="9" width="6" height="1" fill="#fff"/><rect x="3" y="10" width="8" height="1" fill="#fff"/><rect x="11" y="10" width="4" height="1" fill="#000"/><rect x="3" y="11" width="8" height="1" fill="#fff"/><rect x="11" y="11" width="1" height="1" fill="#000"/><rect x="12" y="11" width="3" height="1" fill="#fff"/><rect x="3" y="12" width="8" height="1" fill="#fff"/><rect x="11" y="12" width="3" height="1" fill="#000"/><rect x="14" y="12" width="1" height="1" fill="#fff"/><rect x="3" y="13" width="10" height="1" fill="#fff"/><rect x="13" y="13" width="2" height="1" fill="#000"/><rect x="3" y="14" width="8" height="1" fill="#fff"/><rect x="11" y="14" width="3" height="1" fill="#000"/><rect x="14" y="14" width="1" height="1" fill="#fff"/></svg><span class="t" style="left:421px;top:254px;font-size:12px;line-height:14px;font-weight:bold;transform-origin:0 0;transform:scaleX(1.0822);color:#c6c6c6">007.b...</span><div style="left:507px;top:254px;width:16px;height:14px;background:#c0c0c0;box-shadow:inset -1px -1px 0 #000,inset 1px 1px 0 #fff,inset -2px -2px 0 #808080,inset 2px 2px 0 #dfdfdf"><svg style="left:4px;top:3px" width="8" height="7" viewBox="0 0 8 7" shape-rendering="crispEdges" ><path d="M0 0h2v1h-2zM6 0h2v1h-2zM1 1h2v1h-2zM5 1h2v1h-2zM2 2h4v1h-4zM3 3h2v1h-2zM2 4h4v1h-4zM1 5h2v1h-2zM5 5h2v1h-2zM0 6h2v1h-2zM6 6h2v1h-2z" fill="#000"/></svg></div><div style="left:489px;top:254px;width:16px;height:14px;background:#c0c0c0;box-shadow:inset -1px -1px 0 #000,inset 1px 1px 0 #fff,inset -2px -2px 0 #808080,inset 2px 2px 0 #dfdfdf"><div style="left:3px;top:2px;width:9px;height:9px;border:1px solid #000;border-top:2px solid #000"></div></div><div style="left:473px;top:254px;width:16px;height:14px;background:#c0c0c0;box-shadow:inset -1px -1px 0 #000,inset 1px 1px 0 #fff,inset -2px -2px 0 #808080,inset 2px 2px 0 #dfdfdf"><div style="left:4px;top:9px;width:6px;height:2px;background:#000"></div></div><div style="left:401px;top:271px;width:124px;height:37px;background:#fff;box-shadow:inset -1px -1px 0 #fff,inset 1px 1px 0 #808080,inset -2px -2px 0 #dfdfdf,inset 2px 2px 0 #000"></div><svg style="left:403px;top:273px" width="120" height="33" viewBox="0 0 120 33" shape-rendering="crispEdges" ><rect x="0" y="0" width="120" height="33" fill="#404040"/><path d="M20 0h79l4 33h-86z" fill="#81877f" shape-rendering="auto"/><rect x="60" y="0" width="1" height="33" fill="#c0c0c0"/></svg>
<div style="left:0;top:0;width:744px;height:552px;overflow:hidden"><div style="left:393px;top:306px;width:302px;height:300px;background:#c0c0c0;box-shadow:inset -1px -1px 0 #000,inset 1px 1px 0 #dfdfdf,inset -2px -2px 0 #808080,inset 2px 2px 0 #fff"></div><div style="left:397px;top:310px;width:294px;height:18px;background:linear-gradient(to right,#828282 0,#9a9a9a 50%,#b0b0b0 75%,#c2c2c2 100%)"></div><svg style="left:399px;top:311px" width="16" height="16" viewBox="0 0 16 16" shape-rendering="crispEdges" ><rect x="2" y="0" width="1" height="1" fill="#000"/><rect x="11" y="0" width="1" height="1" fill="#000"/><rect x="3" y="1" width="1" height="1" fill="#000"/><rect x="4" y="1" width="8" height="1" fill="#fff"/><rect x="12" y="1" width="1" height="1" fill="#000"/><rect x="3" y="2" width="1" height="1" fill="#fff"/><rect x="4" y="2" width="1" height="1" fill="#000"/><rect x="5" y="2" width="8" height="1" fill="#fff"/><rect x="13" y="2" width="1" height="1" fill="#000"/><rect x="3" y="3" width="2" height="1" fill="#fff"/><rect x="5" y="3" width="1" height="1" fill="#000"/><rect x="6" y="3" width="5" height="1" fill="#fff"/><rect x="11" y="3" width="3" height="1" fill="#000"/><rect x="3" y="4" width="3" height="1" fill="#fff"/><rect x="6" y="4" width="2" height="1" fill="#000"/><rect x="8" y="4" width="1" height="1" fill="#008000"/><rect x="9" y="4" width="6" height="1" fill="#fff"/><rect x="3" y="5" width="2" height="1" fill="#fff"/><rect x="5" y="5" width="2" height="1" fill="#800000"/><rect x="7" y="5" width="2" height="1" fill="#000"/><rect x="9" y="5" width="2" height="1" fill="#000080"/><rect x="11" y="5" width="4" height="1" fill="#fff"/><rect x="3" y="6" width="1" height="1" fill="#fff"/><rect x="4" y="6" width="1" height="1" fill="#800000"/><rect x="5" y="6" width="1" height="1" fill="#ff0000"/><rect x="6" y="6" width="2" height="1" fill="#800000"/><rect x="8" y="6" width="2" height="1" fill="#000"/><rect x="10" y="6" width="1" height="1" fill="#000080"/><rect x="11" y="6" width="4" height="1" fill="#fff"/><rect x="3" y="7" width="1" height="1" fill="#fff"/><rect x="4" y="7" width="2" height="1" fill="#800000"/><rect x="6" y="7" width="1" height="1" fill="#ff0000"/><rect x="7" y="7" width="2" height="1" fill="#800000"/><rect x="9" y="7" width="2" height="1" fill="#000"/><rect x="11" y="7" width="4" height="1" fill="#fff"/><rect x="3" y="8" width="2" height="1" fill="#fff"/><rect x="5" y="8" width="5" height="1" fill="#800000"/><rect x="10" y="8" width="5" height="1" fill="#fff"/><rect x="3" y="9" width="3" height="1" fill="#fff"/><rect x="6" y="9" width="3" height="1" fill="#800000"/><rect x="9" y="9" width="6" height="1" fill="#fff"/><rect x="3" y="10" width="8" height="1" fill="#fff"/><rect x="11" y="10" width="4" height="1" fill="#000"/><rect x="3" y="11" width="8" height="1" fill="#fff"/><rect x="11" y="11" width="1" height="1" fill="#000"/><rect x="12" y="11" width="3" height="1" fill="#fff"/><rect x="3" y="12" width="8" height="1" fill="#fff"/><rect x="11" y="12" width="3" height="1" fill="#000"/><rect x="14" y="12" width="1" height="1" fill="#fff"/><rect x="3" y="13" width="10" height="1" fill="#fff"/><rect x="13" y="13" width="2" height="1" fill="#000"/><rect x="3" y="14" width="8" height="1" fill="#fff"/><rect x="11" y="14" width="3" height="1" fill="#000"/><rect x="14" y="14" width="1" height="1" fill="#fff"/></svg><span class="t" style="left:417px;top:312px;font-size:12px;line-height:14px;font-weight:bold;transform-origin:0 0;transform:scaleX(0.9917);color:#c6c6c6">8x8x60x480.gif</span><div style="left:673px;top:312px;width:16px;height:14px;background:#c0c0c0;box-shadow:inset -1px -1px 0 #000,inset 1px 1px 0 #fff,inset -2px -2px 0 #808080,inset 2px 2px 0 #dfdfdf"><svg style="left:4px;top:3px" width="8" height="7" viewBox="0 0 8 7" shape-rendering="crispEdges" ><path d="M0 0h2v1h-2zM6 0h2v1h-2zM1 1h2v1h-2zM5 1h2v1h-2zM2 2h4v1h-4zM3 3h2v1h-2zM2 4h4v1h-4zM1 5h2v1h-2zM5 5h2v1h-2zM0 6h2v1h-2zM6 6h2v1h-2z" fill="#000"/></svg></div><div style="left:655px;top:312px;width:16px;height:14px;background:#c0c0c0;box-shadow:inset -1px -1px 0 #000,inset 1px 1px 0 #fff,inset -2px -2px 0 #808080,inset 2px 2px 0 #dfdfdf"><div style="left:3px;top:2px;width:9px;height:9px;border:1px solid #000;border-top:2px solid #000"></div></div><div style="left:639px;top:312px;width:16px;height:14px;background:#c0c0c0;box-shadow:inset -1px -1px 0 #000,inset 1px 1px 0 #fff,inset -2px -2px 0 #808080,inset 2px 2px 0 #dfdfdf"><div style="left:4px;top:9px;width:6px;height:2px;background:#000"></div></div><div style="left:397px;top:329px;width:294px;height:273px;background:#fff;box-shadow:inset -1px -1px 0 #fff,inset 1px 1px 0 #808080,inset -2px -2px 0 #dfdfdf,inset 2px 2px 0 #000"></div><svg style="left:399px;top:331px" width="290" height="230" viewBox="0 0 290 230" shape-rendering="crispEdges" ><rect width="290" height="230" fill="#000"/><rect x="30" y="0" width="30" height="30" fill="#404040"/><rect x="90" y="0" width="30" height="30" fill="#404040"/><rect x="150" y="0" width="30" height="30" fill="#404040"/><rect x="210" y="0" width="30" height="30" fill="#404040"/><rect x="270" y="0" width="30" height="30" fill="#404040"/><rect x="0" y="30" width="30" height="30" fill="#404040"/><rect x="60" y="30" width="30" height="30" fill="#404040"/><rect x="120" y="30" width="30" height="30" fill="#404040"/><rect x="180" y="30" width="30" height="30" fill="#404040"/><rect x="240" y="30" width="30" height="30" fill="#404040"/><rect x="30" y="60" width="30" height="30" fill="#404040"/><rect x="90" y="60" width="30" height="30" fill="#404040"/><rect x="150" y="60" width="30" height="30" fill="#404040"/><rect x="210" y="60" width="30" height="30" fill="#404040"/><rect x="270" y="60" width="30" height="30" fill="#404040"/><rect x="0" y="90" width="30" height="30" fill="#404040"/><rect x="60" y="90" width="30" height="30" fill="#404040"/><rect x="120" y="90" width="30" height="30" fill="#404040"/><rect x="180" y="90" width="30" height="30" fill="#404040"/><rect x="240" y="90" width="30" height="30" fill="#404040"/><rect x="30" y="120" width="30" height="30" fill="#404040"/><rect x="90" y="120" width="30" height="30" fill="#404040"/><rect x="150" y="120" width="30" height="30" fill="#404040"/><rect x="210" y="120" width="30" height="30" fill="#404040"/><rect x="270" y="120" width="30" height="30" fill="#404040"/><rect x="0" y="150" width="30" height="30" fill="#404040"/><rect x="60" y="150" width="30" height="30" fill="#404040"/><rect x="120" y="150" width="30" height="30" fill="#404040"/><rect x="180" y="150" width="30" height="30" fill="#404040"/><rect x="240" y="150" width="30" height="30" fill="#404040"/><rect x="30" y="180" width="30" height="30" fill="#404040"/><rect x="90" y="180" width="30" height="30" fill="#404040"/><rect x="150" y="180" width="30" height="30" fill="#404040"/><rect x="210" y="180" width="30" height="30" fill="#404040"/><rect x="270" y="180" width="30" height="30" fill="#404040"/><rect x="0" y="210" width="30" height="30" fill="#404040"/><rect x="60" y="210" width="30" height="30" fill="#404040"/><rect x="120" y="210" width="30" height="30" fill="#404040"/><rect x="180" y="210" width="30" height="30" fill="#404040"/><rect x="240" y="210" width="30" height="30" fill="#404040"/><rect x="0" y="0" width="1" height="230" fill="#c0c0c0"/><rect x="30" y="0" width="1" height="230" fill="#c0c0c0"/><rect x="60" y="0" width="1" height="230" fill="#c0c0c0"/><rect x="90" y="0" width="1" height="230" fill="#c0c0c0"/><rect x="120" y="0" width="1" height="230" fill="#c0c0c0"/><rect x="150" y="0" width="1" height="230" fill="#c0c0c0"/><rect x="180" y="0" width="1" height="230" fill="#c0c0c0"/><rect x="210" y="0" width="1" height="230" fill="#c0c0c0"/><rect x="240" y="0" width="1" height="230" fill="#c0c0c0"/><rect x="270" y="0" width="1" height="230" fill="#c0c0c0"/><rect x="0" y="0" width="290" height="1" fill="#c0c0c0"/><rect x="0" y="30" width="290" height="1" fill="#c0c0c0"/><rect x="0" y="60" width="290" height="1" fill="#c0c0c0"/><rect x="0" y="90" width="290" height="1" fill="#c0c0c0"/><rect x="0" y="120" width="290" height="1" fill="#c0c0c0"/><rect x="0" y="150" width="290" height="1" fill="#c0c0c0"/><rect x="0" y="180" width="290" height="1" fill="#c0c0c0"/><rect x="0" y="210" width="290" height="1" fill="#c0c0c0"/></svg><span class="t" style="left:507px;top:312px;font-size:12px;line-height:14px;font-weight:bold;transform-origin:0 0;transform:scaleX(0.9375);color:#c6c6c6">[1:2] (Background)</span></div>
<div style="left:626px;top:71px;width:112px;height:91px;background:#c0c0c0;box-shadow:inset -1px -1px 0 #000,inset 1px 1px 0 #dfdfdf,inset -2px -2px 0 #808080,inset 2px 2px 0 #fff"></div><div style="left:630px;top:75px;width:104px;height:18px;background:linear-gradient(to right,#828282 0,#9a9a9a 50%,#b0b0b0 75%,#c2c2c2 100%)"></div><svg style="left:632px;top:76px" width="16" height="16" viewBox="0 0 16 16" shape-rendering="crispEdges" ><rect x="2" y="0" width="1" height="1" fill="#000"/><rect x="11" y="0" width="1" height="1" fill="#000"/><rect x="3" y="1" width="1" height="1" fill="#000"/><rect x="4" y="1" width="8" height="1" fill="#fff"/><rect x="12" y="1" width="1" height="1" fill="#000"/><rect x="3" y="2" width="1" height="1" fill="#fff"/><rect x="4" y="2" width="1" height="1" fill="#000"/><rect x="5" y="2" width="8" height="1" fill="#fff"/><rect x="13" y="2" width="1" height="1" fill="#000"/><rect x="3" y="3" width="2" height="1" fill="#fff"/><rect x="5" y="3" width="1" height="1" fill="#000"/><rect x="6" y="3" width="5" height="1" fill="#fff"/><rect x="11" y="3" width="3" height="1" fill="#000"/><rect x="3" y="4" width="3" height="1" fill="#fff"/><rect x="6" y="4" width="2" height="1" fill="#000"/><rect x="8" y="4" width="1" height="1" fill="#008000"/><rect x="9" y="4" width="6" height="1" fill="#fff"/><rect x="3" y="5" width="2" height="1" fill="#fff"/><rect x="5" y="5" width="2" height="1" fill="#800000"/><rect x="7" y="5" width="2" height="1" fill="#000"/><rect x="9" y="5" width="2" height="1" fill="#000080"/><rect x="11" y="5" width="4" height="1" fill="#fff"/><rect x="3" y="6" width="1" height="1" fill="#fff"/><rect x="4" y="6" width="1" height="1" fill="#800000"/><rect x="5" y="6" width="1" height="1" fill="#ff0000"/><rect x="6" y="6" width="2" height="1" fill="#800000"/><rect x="8" y="6" width="2" height="1" fill="#000"/><rect x="10" y="6" width="1" height="1" fill="#000080"/><rect x="11" y="6" width="4" height="1" fill="#fff"/><rect x="3" y="7" width="1" height="1" fill="#fff"/><rect x="4" y="7" width="2" height="1" fill="#800000"/><rect x="6" y="7" width="1" height="1" fill="#ff0000"/><rect x="7" y="7" width="2" height="1" fill="#800000"/><rect x="9" y="7" width="2" height="1" fill="#000"/><rect x="11" y="7" width="4" height="1" fill="#fff"/><rect x="3" y="8" width="2" height="1" fill="#fff"/><rect x="5" y="8" width="5" height="1" fill="#800000"/><rect x="10" y="8" width="5" height="1" fill="#fff"/><rect x="3" y="9" width="3" height="1" fill="#fff"/><rect x="6" y="9" width="3" height="1" fill="#800000"/><rect x="9" y="9" width="6" height="1" fill="#fff"/><rect x="3" y="10" width="8" height="1" fill="#fff"/><rect x="11" y="10" width="4" height="1" fill="#000"/><rect x="3" y="11" width="8" height="1" fill="#fff"/><rect x="11" y="11" width="1" height="1" fill="#000"/><rect x="12" y="11" width="3" height="1" fill="#fff"/><rect x="3" y="12" width="8" height="1" fill="#fff"/><rect x="11" y="12" width="3" height="1" fill="#000"/><rect x="14" y="12" width="1" height="1" fill="#fff"/><rect x="3" y="13" width="10" height="1" fill="#fff"/><rect x="13" y="13" width="2" height="1" fill="#000"/><rect x="3" y="14" width="8" height="1" fill="#fff"/><rect x="11" y="14" width="3" height="1" fill="#000"/><rect x="14" y="14" width="1" height="1" fill="#fff"/></svg><span class="t" style="left:650px;top:77px;font-size:12px;line-height:14px;font-weight:bold;transform-origin:0 0;transform:scaleX(0.9431);color:#c6c6c6">00...</span><div style="left:716px;top:77px;width:16px;height:14px;background:#c0c0c0;box-shadow:inset -1px -1px 0 #000,inset 1px 1px 0 #fff,inset -2px -2px 0 #808080,inset 2px 2px 0 #dfdfdf"><svg style="left:4px;top:3px" width="8" height="7" viewBox="0 0 8 7" shape-rendering="crispEdges" ><path d="M0 0h2v1h-2zM6 0h2v1h-2zM1 1h2v1h-2zM5 1h2v1h-2zM2 2h4v1h-4zM3 3h2v1h-2zM2 4h4v1h-4zM1 5h2v1h-2zM5 5h2v1h-2zM0 6h2v1h-2zM6 6h2v1h-2z" fill="#000"/></svg></div><div style="left:698px;top:77px;width:16px;height:14px;background:#c0c0c0;box-shadow:inset -1px -1px 0 #000,inset 1px 1px 0 #fff,inset -2px -2px 0 #808080,inset 2px 2px 0 #dfdfdf"><div style="left:3px;top:2px;width:9px;height:9px;border:1px solid #000;border-top:2px solid #000"></div></div><div style="left:682px;top:77px;width:16px;height:14px;background:#c0c0c0;box-shadow:inset -1px -1px 0 #000,inset 1px 1px 0 #fff,inset -2px -2px 0 #808080,inset 2px 2px 0 #dfdfdf"><div style="left:4px;top:9px;width:6px;height:2px;background:#000"></div></div><div style="left:630px;top:94px;width:104px;height:64px;background:#fff;box-shadow:inset -1px -1px 0 #fff,inset 1px 1px 0 #808080,inset -2px -2px 0 #dfdfdf,inset 2px 2px 0 #000"></div><svg style="left:632px;top:96px" width="100" height="60" viewBox="0 0 100 60" shape-rendering="crispEdges" ><defs><pattern id="h2" x="7" y="7" width="8" height="8" patternUnits="userSpaceOnUse"><rect x="0" y="0" width="1" height="1" fill="#bababa"/><rect x="7" y="0" width="1" height="1" fill="#bababa"/><rect x="1" y="1" width="1" height="1" fill="#bababa"/><rect x="6" y="1" width="1" height="1" fill="#bababa"/><rect x="2" y="2" width="1" height="1" fill="#bababa"/><rect x="5" y="2" width="1" height="1" fill="#bababa"/><rect x="3" y="3" width="1" height="1" fill="#bababa"/><rect x="4" y="3" width="1" height="1" fill="#bababa"/><rect x="3" y="4" width="1" height="1" fill="#bababa"/><rect x="4" y="4" width="1" height="1" fill="#bababa"/><rect x="2" y="5" width="1" height="1" fill="#bababa"/><rect x="5" y="5" width="1" height="1" fill="#bababa"/><rect x="1" y="6" width="1" height="1" fill="#bababa"/><rect x="6" y="6" width="1" height="1" fill="#bababa"/><rect x="0" y="7" width="1" height="1" fill="#bababa"/><rect x="7" y="7" width="1" height="1" fill="#bababa"/></pattern></defs><rect width="100" height="60" fill="#fff"/><rect width="100" height="60" fill="url(#h2)"/></svg><svg style="left:652px;top:96px" width="60" height="60" viewBox="0 0 60 60" shape-rendering="crispEdges" ><rect width="60" height="60" fill="#404040"/><rect x="40" y="0" width="1" height="60" fill="#c0c0c0"/><path d="M0 20.500h3v1h3v1h3v-1h5v-1h8v-1h6v-1h8v1h4v1h6v1h5v-1h6" fill="none" stroke="#000"/></svg>
<div style="left:625px;top:165px;width:112px;height:92px;background:#c0c0c0;box-shadow:inset -1px -1px 0 #000,inset 1px 1px 0 #dfdfdf,inset -2px -2px 0 #808080,inset 2px 2px 0 #fff"></div><div style="left:629px;top:169px;width:104px;height:18px;background:linear-gradient(to right,#828282 0,#9a9a9a 50%,#b0b0b0 75%,#c2c2c2 100%)"></div><svg style="left:631px;top:170px" width="16" height="16" viewBox="0 0 16 16" shape-rendering="crispEdges" ><rect x="2" y="0" width="1" height="1" fill="#000"/><rect x="11" y="0" width="1" height="1" fill="#000"/><rect x="3" y="1" width="1" height="1" fill="#000"/><rect x="4" y="1" width="8" height="1" fill="#fff"/><rect x="12" y="1" width="1" height="1" fill="#000"/><rect x="3" y="2" width="1" height="1" fill="#fff"/><rect x="4" y="2" width="1" height="1" fill="#000"/><rect x="5" y="2" width="8" height="1" fill="#fff"/><rect x="13" y="2" width="1" height="1" fill="#000"/><rect x="3" y="3" width="2" height="1" fill="#fff"/><rect x="5" y="3" width="1" height="1" fill="#000"/><rect x="6" y="3" width="5" height="1" fill="#fff"/><rect x="11" y="3" width="3" height="1" fill="#000"/><rect x="3" y="4" width="3" height="1" fill="#fff"/><rect x="6" y="4" width="2" height="1" fill="#000"/><rect x="8" y="4" width="1" height="1" fill="#008000"/><rect x="9" y="4" width="6" height="1" fill="#fff"/><rect x="3" y="5" width="2" height="1" fill="#fff"/><rect x="5" y="5" width="2" height="1" fill="#800000"/><rect x="7" y="5" width="2" height="1" fill="#000"/><rect x="9" y="5" width="2" height="1" fill="#000080"/><rect x="11" y="5" width="4" height="1" fill="#fff"/><rect x="3" y="6" width="1" height="1" fill="#fff"/><rect x="4" y="6" width="1" height="1" fill="#800000"/><rect x="5" y="6" width="1" height="1" fill="#ff0000"/><rect x="6" y="6" width="2" height="1" fill="#800000"/><rect x="8" y="6" width="2" height="1" fill="#000"/><rect x="10" y="6" width="1" height="1" fill="#000080"/><rect x="11" y="6" width="4" height="1" fill="#fff"/><rect x="3" y="7" width="1" height="1" fill="#fff"/><rect x="4" y="7" width="2" height="1" fill="#800000"/><rect x="6" y="7" width="1" height="1" fill="#ff0000"/><rect x="7" y="7" width="2" height="1" fill="#800000"/><rect x="9" y="7" width="2" height="1" fill="#000"/><rect x="11" y="7" width="4" height="1" fill="#fff"/><rect x="3" y="8" width="2" height="1" fill="#fff"/><rect x="5" y="8" width="5" height="1" fill="#800000"/><rect x="10" y="8" width="5" height="1" fill="#fff"/><rect x="3" y="9" width="3" height="1" fill="#fff"/><rect x="6" y="9" width="3" height="1" fill="#800000"/><rect x="9" y="9" width="6" height="1" fill="#fff"/><rect x="3" y="10" width="8" height="1" fill="#fff"/><rect x="11" y="10" width="4" height="1" fill="#000"/><rect x="3" y="11" width="8" height="1" fill="#fff"/><rect x="11" y="11" width="1" height="1" fill="#000"/><rect x="12" y="11" width="3" height="1" fill="#fff"/><rect x="3" y="12" width="8" height="1" fill="#fff"/><rect x="11" y="12" width="3" height="1" fill="#000"/><rect x="14" y="12" width="1" height="1" fill="#fff"/><rect x="3" y="13" width="10" height="1" fill="#fff"/><rect x="13" y="13" width="2" height="1" fill="#000"/><rect x="3" y="14" width="8" height="1" fill="#fff"/><rect x="11" y="14" width="3" height="1" fill="#000"/><rect x="14" y="14" width="1" height="1" fill="#fff"/></svg><span class="t" style="left:649px;top:171px;font-size:12px;line-height:14px;font-weight:bold;transform-origin:0 0;transform:scaleX(0.9431);color:#c6c6c6">00...</span><div style="left:715px;top:171px;width:16px;height:14px;background:#c0c0c0;box-shadow:inset -1px -1px 0 #000,inset 1px 1px 0 #fff,inset -2px -2px 0 #808080,inset 2px 2px 0 #dfdfdf"><svg style="left:4px;top:3px" width="8" height="7" viewBox="0 0 8 7" shape-rendering="crispEdges" ><path d="M0 0h2v1h-2zM6 0h2v1h-2zM1 1h2v1h-2zM5 1h2v1h-2zM2 2h4v1h-4zM3 3h2v1h-2zM2 4h4v1h-4zM1 5h2v1h-2zM5 5h2v1h-2zM0 6h2v1h-2zM6 6h2v1h-2z" fill="#000"/></svg></div><div style="left:697px;top:171px;width:16px;height:14px;background:#c0c0c0;box-shadow:inset -1px -1px 0 #000,inset 1px 1px 0 #fff,inset -2px -2px 0 #808080,inset 2px 2px 0 #dfdfdf"><div style="left:3px;top:2px;width:9px;height:9px;border:1px solid #000;border-top:2px solid #000"></div></div><div style="left:681px;top:171px;width:16px;height:14px;background:#c0c0c0;box-shadow:inset -1px -1px 0 #000,inset 1px 1px 0 #fff,inset -2px -2px 0 #808080,inset 2px 2px 0 #dfdfdf"><div style="left:4px;top:9px;width:6px;height:2px;background:#000"></div></div><div style="left:629px;top:188px;width:104px;height:65px;background:#fff;box-shadow:inset -1px -1px 0 #fff,inset 1px 1px 0 #808080,inset -2px -2px 0 #dfdfdf,inset 2px 2px 0 #000"></div><svg style="left:631px;top:190px" width="100" height="61" viewBox="0 0 100 61" shape-rendering="crispEdges" ><defs><pattern id="h3" x="7" y="7" width="8" height="8" patternUnits="userSpaceOnUse"><rect x="0" y="0" width="1" height="1" fill="#bababa"/><rect x="7" y="0" width="1" height="1" fill="#bababa"/><rect x="1" y="1" width="1" height="1" fill="#bababa"/><rect x="6" y="1" width="1" height="1" fill="#bababa"/><rect x="2" y="2" width="1" height="1" fill="#bababa"/><rect x="5" y="2" width="1" height="1" fill="#bababa"/><rect x="3" y="3" width="1" height="1" fill="#bababa"/><rect x="4" y="3" width="1" height="1" fill="#bababa"/><rect x="3" y="4" width="1" height="1" fill="#bababa"/><rect x="4" y="4" width="1" height="1" fill="#bababa"/><rect x="2" y="5" width="1" height="1" fill="#bababa"/><rect x="5" y="5" width="1" height="1" fill="#bababa"/><rect x="1" y="6" width="1" height="1" fill="#bababa"/><rect x="6" y="6" width="1" height="1" fill="#bababa"/><rect x="0" y="7" width="1" height="1" fill="#bababa"/><rect x="7" y="7" width="1" height="1" fill="#bababa"/></pattern></defs><rect width="100" height="61" fill="#fff"/><rect width="100" height="61" fill="url(#h3)"/></svg><svg style="left:651px;top:190px" width="60" height="61" viewBox="0 0 60 61" shape-rendering="crispEdges" ><rect width="60" height="61" fill="#404040"/><rect x="40" y="0" width="1" height="61" fill="#c0c0c0"/></svg>
<div style="left:38px;top:75px;width:352px;height:371px;background:#c0c0c0;box-shadow:inset -1px -1px 0 #000,inset 1px 1px 0 #dfdfdf,inset -2px -2px 0 #808080,inset 2px 2px 0 #fff"></div><div style="left:42px;top:79px;width:344px;height:18px;background:linear-gradient(to right,#828282 0,#9a9a9a 50%,#b0b0b0 75%,#c2c2c2 100%)"></div><svg style="left:44px;top:80px" width="16" height="16" viewBox="0 0 16 16" shape-rendering="crispEdges" ><rect x="2" y="0" width="1" height="1" fill="#000"/><rect x="11" y="0" width="1" height="1" fill="#000"/><rect x="3" y="1" width="1" height="1" fill="#000"/><rect x="4" y="1" width="8" height="1" fill="#fff"/><rect x="12" y="1" width="1" height="1" fill="#000"/><rect x="3" y="2" width="1" height="1" fill="#fff"/><rect x="4" y="2" width="1" height="1" fill="#000"/><rect x="5" y="2" width="8" height="1" fill="#fff"/><rect x="13" y="2" width="1" height="1" fill="#000"/><rect x="3" y="3" width="2" height="1" fill="#fff"/><rect x="5" y="3" width="1" height="1" fill="#000"/><rect x="6" y="3" width="5" height="1" fill="#fff"/><rect x="11" y="3" width="3" height="1" fill="#000"/><rect x="3" y="4" width="3" height="1" fill="#fff"/><rect x="6" y="4" width="2" height="1" fill="#000"/><rect x="8" y="4" width="1" height="1" fill="#008000"/><rect x="9" y="4" width="6" height="1" fill="#fff"/><rect x="3" y="5" width="2" height="1" fill="#fff"/><rect x="5" y="5" width="2" height="1" fill="#800000"/><rect x="7" y="5" width="2" height="1" fill="#000"/><rect x="9" y="5" width="2" height="1" fill="#000080"/><rect x="11" y="5" width="4" height="1" fill="#fff"/><rect x="3" y="6" width="1" height="1" fill="#fff"/><rect x="4" y="6" width="1" height="1" fill="#800000"/><rect x="5" y="6" width="1" height="1" fill="#ff0000"/><rect x="6" y="6" width="2" height="1" fill="#800000"/><rect x="8" y="6" width="2" height="1" fill="#000"/><rect x="10" y="6" width="1" height="1" fill="#000080"/><rect x="11" y="6" width="4" height="1" fill="#fff"/><rect x="3" y="7" width="1" height="1" fill="#fff"/><rect x="4" y="7" width="2" height="1" fill="#800000"/><rect x="6" y="7" width="1" height="1" fill="#ff0000"/><rect x="7" y="7" width="2" height="1" fill="#800000"/><rect x="9" y="7" width="2" height="1" fill="#000"/><rect x="11" y="7" width="4" height="1" fill="#fff"/><rect x="3" y="8" width="2" height="1" fill="#fff"/><rect x="5" y="8" width="5" height="1" fill="#800000"/><rect x="10" y="8" width="5" height="1" fill="#fff"/><rect x="3" y="9" width="3" height="1" fill="#fff"/><rect x="6" y="9" width="3" height="1" fill="#800000"/><rect x="9" y="9" width="6" height="1" fill="#fff"/><rect x="3" y="10" width="8" height="1" fill="#fff"/><rect x="11" y="10" width="4" height="1" fill="#000"/><rect x="3" y="11" width="8" height="1" fill="#fff"/><rect x="11" y="11" width="1" height="1" fill="#000"/><rect x="12" y="11" width="3" height="1" fill="#fff"/><rect x="3" y="12" width="8" height="1" fill="#fff"/><rect x="11" y="12" width="3" height="1" fill="#000"/><rect x="14" y="12" width="1" height="1" fill="#fff"/><rect x="3" y="13" width="10" height="1" fill="#fff"/><rect x="13" y="13" width="2" height="1" fill="#000"/><rect x="3" y="14" width="8" height="1" fill="#fff"/><rect x="11" y="14" width="3" height="1" fill="#000"/><rect x="14" y="14" width="1" height="1" fill="#fff"/></svg><span class="t" style="left:62px;top:81px;font-size:12px;line-height:14px;font-weight:bold;transform-origin:0 0;transform:scaleX(0.9958);color:#c6c6c6">Image12* [1:3] (Background)</span><div style="left:368px;top:81px;width:16px;height:14px;background:#c0c0c0;box-shadow:inset -1px -1px 0 #000,inset 1px 1px 0 #fff,inset -2px -2px 0 #808080,inset 2px 2px 0 #dfdfdf"><svg style="left:4px;top:3px" width="8" height="7" viewBox="0 0 8 7" shape-rendering="crispEdges" ><path d="M0 0h2v1h-2zM6 0h2v1h-2zM1 1h2v1h-2zM5 1h2v1h-2zM2 2h4v1h-4zM3 3h2v1h-2zM2 4h4v1h-4zM1 5h2v1h-2zM5 5h2v1h-2zM0 6h2v1h-2zM6 6h2v1h-2z" fill="#000"/></svg></div><div style="left:350px;top:81px;width:16px;height:14px;background:#c0c0c0;box-shadow:inset -1px -1px 0 #000,inset 1px 1px 0 #fff,inset -2px -2px 0 #808080,inset 2px 2px 0 #dfdfdf"><div style="left:3px;top:2px;width:9px;height:9px;border:1px solid #000;border-top:2px solid #000"></div></div><div style="left:334px;top:81px;width:16px;height:14px;background:#c0c0c0;box-shadow:inset -1px -1px 0 #000,inset 1px 1px 0 #fff,inset -2px -2px 0 #808080,inset 2px 2px 0 #dfdfdf"><div style="left:4px;top:9px;width:6px;height:2px;background:#000"></div></div><div style="left:42px;top:98px;width:344px;height:344px;background:#fff;box-shadow:inset -1px -1px 0 #fff,inset 1px 1px 0 #808080,inset -2px -2px 0 #dfdfdf,inset 2px 2px 0 #000"></div><svg style="left:44px;top:100px" width="340" height="340" viewBox="0 0 340 340" shape-rendering="crispEdges" ><rect width="340" height="340" fill="#000"/><rect x="20" y="0" width="20" height="20" fill="#404040"/><rect x="60" y="0" width="20" height="20" fill="#404040"/><rect x="100" y="0" width="20" height="20" fill="#404040"/><rect x="140" y="0" width="20" height="20" fill="#404040"/><rect x="160" y="0" width="20" height="20" fill="#ffbcc0"/><rect x="200" y="0" width="20" height="20" fill="#404040"/><rect x="240" y="0" width="20" height="20" fill="#404040"/><rect x="280" y="0" width="20" height="20" fill="#404040"/><rect x="320" y="0" width="20" height="20" fill="#404040"/><rect x="0" y="20" width="20" height="20" fill="#404040"/><rect x="40" y="20" width="20" height="20" fill="#404040"/><rect x="80" y="20" width="20" height="20" fill="#404040"/><rect x="120" y="20" width="20" height="20" fill="#404040"/><rect x="160" y="20" width="20" height="20" fill="#404040"/><rect x="180" y="20" width="20" height="20" fill="#404040"/><rect x="220" y="20" width="20" height="20" fill="#404040"/><rect x="260" y="20" width="20" height="20" fill="#404040"/><rect x="300" y="20" width="20" height="20" fill="#404040"/><rect x="20" y="40" width="20" height="20" fill="#404040"/><rect x="60" y="40" width="20" height="20" fill="#404040"/><rect x="100" y="40" width="20" height="20" fill="#404040"/><rect x="140" y="40" width="20" height="20" fill="#404040"/><rect x="160" y="40" width="20" height="20" fill="#404040"/><rect x="200" y="40" width="20" height="20" fill="#404040"/><rect x="240" y="40" width="20" height="20" fill="#404040"/><rect x="280" y="40" width="20" height="20" fill="#404040"/><rect x="320" y="40" width="20" height="20" fill="#404040"/><rect x="0" y="60" width="20" height="20" fill="#404040"/><rect x="40" y="60" width="20" height="20" fill="#404040"/><rect x="80" y="60" width="20" height="20" fill="#404040"/><rect x="120" y="60" width="20" height="20" fill="#404040"/><rect x="160" y="60" width="20" height="20" fill="#ffbcc0"/><rect x="180" y="60" width="20" height="20" fill="#404040"/><rect x="220" y="60" width="20" height="20" fill="#404040"/><rect x="260" y="60" width="20" height="20" fill="#404040"/><rect x="300" y="60" width="20" height="20" fill="#404040"/><rect x="20" y="80" width="20" height="20" fill="#404040"/><rect x="60" y="80" width="20" height="20" fill="#404040"/><rect x="100" y="80" width="20" height="20" fill="#404040"/><rect x="140" y="80" width="20" height="20" fill="#404040"/><rect x="160" y="80" width="20" height="20" fill="#ffbcc0"/><rect x="200" y="80" width="20" height="20" fill="#404040"/><rect x="240" y="80" width="20" height="20" fill="#404040"/><rect x="280" y="80" width="20" height="20" fill="#404040"/><rect x="320" y="80" width="20" height="20" fill="#404040"/><rect x="0" y="100" width="20" height="20" fill="#404040"/><rect x="40" y="100" width="20" height="20" fill="#404040"/><rect x="80" y="100" width="20" height="20" fill="#404040"/><rect x="120" y="100" width="20" height="20" fill="#404040"/><rect x="160" y="100" width="20" height="20" fill="#ffbcc0"/><rect x="180" y="100" width="20" height="20" fill="#404040"/><rect x="220" y="100" width="20" height="20" fill="#404040"/><rect x="260" y="100" width="20" height="20" fill="#404040"/><rect x="300" y="100" width="20" height="20" fill="#404040"/><rect x="20" y="120" width="20" height="20" fill="#404040"/><rect x="60" y="120" width="20" height="20" fill="#404040"/><rect x="100" y="120" width="20" height="20" fill="#404040"/><rect x="140" y="120" width="20" height="20" fill="#404040"/><rect x="160" y="120" width="20" height="20" fill="#ffbcc0"/><rect x="200" y="120" width="20" height="20" fill="#404040"/><rect x="240" y="120" width="20" height="20" fill="#404040"/><rect x="280" y="120" width="20" height="20" fill="#404040"/><rect x="320" y="120" width="20" height="20" fill="#404040"/><rect x="0" y="140" width="20" height="20" fill="#404040"/><rect x="40" y="140" width="20" height="20" fill="#404040"/><rect x="80" y="140" width="20" height="20" fill="#404040"/><rect x="120" y="140" width="20" height="20" fill="#404040"/><rect x="160" y="140" width="20" height="20" fill="#ffbcc0"/><rect x="180" y="140" width="20" height="20" fill="#404040"/><rect x="220" y="140" width="20" height="20" fill="#404040"/><rect x="260" y="140" width="20" height="20" fill="#404040"/><rect x="300" y="140" width="20" height="20" fill="#404040"/><rect x="0" y="160" width="20" height="20" fill="#ffbcc0"/><rect x="20" y="160" width="20" height="20" fill="#404040"/><rect x="40" y="160" width="20" height="20" fill="#404040"/><rect x="60" y="160" width="20" height="20" fill="#ffbcc0"/><rect x="80" y="160" width="20" height="20" fill="#ffbcc0"/><rect x="100" y="160" width="20" height="20" fill="#ffbcc0"/><rect x="120" y="160" width="20" height="20" fill="#ffbcc0"/><rect x="140" y="160" width="20" height="20" fill="#ffbcc0"/><rect x="160" y="160" width="20" height="20" fill="#ffbcc0"/><rect x="180" y="160" width="20" height="20" fill="#ffbcc0"/><rect x="200" y="160" width="20" height="20" fill="#ffbcc0"/><rect x="220" y="160" width="20" height="20" fill="#ffbcc0"/><rect x="240" y="160" width="20" height="20" fill="#ffbcc0"/><rect x="260" y="160" width="20" height="20" fill="#ffbcc0"/><rect x="280" y="160" width="20" height="20" fill="#404040"/><rect x="300" y="160" width="20" height="20" fill="#404040"/><rect x="320" y="160" width="20" height="20" fill="#ffbcc0"/><rect x="20" y="180" width="20" height="20" fill="#404040"/><rect x="60" y="180" width="20" height="20" fill="#404040"/><rect x="100" y="180" width="20" height="20" fill="#404040"/><rect x="140" y="180" width="20" height="20" fill="#404040"/><rect x="160" y="180" width="20" height="20" fill="#ffbcc0"/><rect x="200" y="180" width="20" height="20" fill="#404040"/><rect x="240" y="180" width="20" height="20" fill="#404040"/><rect x="280" y="180" width="20" height="20" fill="#404040"/><rect x="320" y="180" width="20" height="20" fill="#404040"/><rect x="0" y="200" width="20" height="20" fill="#404040"/><rect x="40" y="200" width="20" height="20" fill="#404040"/><rect x="80" y="200" width="20" height="20" fill="#404040"/><rect x="120" y="200" width="20" height="20" fill="#404040"/><rect x="160" y="200" width="20" height="20" fill="#ffbcc0"/><rect x="180" y="200" width="20" height="20" fill="#404040"/><rect x="220" y="200" width="20" height="20" fill="#404040"/><rect x="260" y="200" width="20" height="20" fill="#404040"/><rect x="300" y="200" width="20" height="20" fill="#404040"/><rect x="20" y="220" width="20" height="20" fill="#404040"/><rect x="60" y="220" width="20" height="20" fill="#404040"/><rect x="100" y="220" width="20" height="20" fill="#404040"/><rect x="140" y="220" width="20" height="20" fill="#404040"/><rect x="160" y="220" width="20" height="20" fill="#ffbcc0"/><rect x="200" y="220" width="20" height="20" fill="#404040"/><rect x="240" y="220" width="20" height="20" fill="#404040"/><rect x="280" y="220" width="20" height="20" fill="#404040"/><rect x="320" y="220" width="20" height="20" fill="#404040"/><rect x="0" y="240" width="20" height="20" fill="#404040"/><rect x="40" y="240" width="20" height="20" fill="#404040"/><rect x="80" y="240" width="20" height="20" fill="#404040"/><rect x="120" y="240" width="20" height="20" fill="#404040"/><rect x="160" y="240" width="20" height="20" fill="#ffbcc0"/><rect x="180" y="240" width="20" height="20" fill="#404040"/><rect x="220" y="240" width="20" height="20" fill="#404040"/><rect x="260" y="240" width="20" height="20" fill="#404040"/><rect x="300" y="240" width="20" height="20" fill="#404040"/><rect x="20" y="260" width="20" height="20" fill="#404040"/><rect x="60" y="260" width="20" height="20" fill="#404040"/><rect x="100" y="260" width="20" height="20" fill="#404040"/><rect x="140" y="260" width="20" height="20" fill="#404040"/><rect x="160" y="260" width="20" height="20" fill="#ffbcc0"/><rect x="200" y="260" width="20" height="20" fill="#404040"/><rect x="240" y="260" width="20" height="20" fill="#404040"/><rect x="280" y="260" width="20" height="20" fill="#404040"/><rect x="320" y="260" width="20" height="20" fill="#404040"/><rect x="0" y="280" width="20" height="20" fill="#404040"/><rect x="40" y="280" width="20" height="20" fill="#404040"/><rect x="80" y="280" width="20" height="20" fill="#404040"/><rect x="120" y="280" width="20" height="20" fill="#404040"/><rect x="160" y="280" width="20" height="20" fill="#404040"/><rect x="180" y="280" width="20" height="20" fill="#404040"/><rect x="220" y="280" width="20" height="20" fill="#404040"/><rect x="260" y="280" width="20" height="20" fill="#404040"/><rect x="300" y="280" width="20" height="20" fill="#404040"/><rect x="20" y="300" width="20" height="20" fill="#404040"/><rect x="60" y="300" width="20" height="20" fill="#404040"/><rect x="100" y="300" width="20" height="20" fill="#404040"/><rect x="140" y="300" width="20" height="20" fill="#404040"/><rect x="160" y="300" width="20" height="20" fill="#404040"/><rect x="200" y="300" width="20" height="20" fill="#404040"/><rect x="240" y="300" width="20" height="20" fill="#404040"/><rect x="280" y="300" width="20" height="20" fill="#404040"/><rect x="320" y="300" width="20" height="20" fill="#404040"/><rect x="0" y="320" width="20" height="20" fill="#404040"/><rect x="40" y="320" width="20" height="20" fill="#404040"/><rect x="80" y="320" width="20" height="20" fill="#404040"/><rect x="120" y="320" width="20" height="20" fill="#404040"/><rect x="160" y="320" width="20" height="20" fill="#ffbcc0"/><rect x="180" y="320" width="20" height="20" fill="#404040"/><rect x="220" y="320" width="20" height="20" fill="#404040"/><rect x="260" y="320" width="20" height="20" fill="#404040"/><rect x="300" y="320" width="20" height="20" fill="#404040"/><clipPath id="rc"><path d="M0 0h20v20h-20zM20 0h20v20h-20zM40 0h20v20h-20zM60 0h20v20h-20zM80 0h20v20h-20zM100 0h20v20h-20zM120 0h20v20h-20zM140 0h20v20h-20zM180 0h20v20h-20zM200 0h20v20h-20zM220 0h20v20h-20zM240 0h20v20h-20zM260 0h20v20h-20zM280 0h20v20h-20zM300 0h20v20h-20zM320 0h20v20h-20zM0 20h20v20h-20zM20 20h20v20h-20zM40 20h20v20h-20zM60 20h20v20h-20zM80 20h20v20h-20zM100 20h20v20h-20zM120 20h20v20h-20zM140 20h20v20h-20zM160 20h20v20h-20zM180 20h20v20h-20zM200 20h20v20h-20zM220 20h20v20h-20zM240 20h20v20h-20zM260 20h20v20h-20zM280 20h20v20h-20zM300 20h20v20h-20zM320 20h20v20h-20zM0 40h20v20h-20zM20 40h20v20h-20zM40 40h20v20h-20zM60 40h20v20h-20zM80 40h20v20h-20zM100 40h20v20h-20zM120 40h20v20h-20zM140 40h20v20h-20zM160 40h20v20h-20zM180 40h20v20h-20zM200 40h20v20h-20zM220 40h20v20h-20zM240 40h20v20h-20zM260 40h20v20h-20zM280 40h20v20h-20zM300 40h20v20h-20zM320 40h20v20h-20zM0 60h20v20h-20zM20 60h20v20h-20zM40 60h20v20h-20zM60 60h20v20h-20zM80 60h20v20h-20zM100 60h20v20h-20zM120 60h20v20h-20zM140 60h20v20h-20zM180 60h20v20h-20zM200 60h20v20h-20zM220 60h20v20h-20zM240 60h20v20h-20zM260 60h20v20h-20zM280 60h20v20h-20zM300 60h20v20h-20zM320 60h20v20h-20zM0 80h20v20h-20zM20 80h20v20h-20zM40 80h20v20h-20zM60 80h20v20h-20zM80 80h20v20h-20zM100 80h20v20h-20zM120 80h20v20h-20zM140 80h20v20h-20zM180 80h20v20h-20zM200 80h20v20h-20zM220 80h20v20h-20zM240 80h20v20h-20zM260 80h20v20h-20zM280 80h20v20h-20zM300 80h20v20h-20zM320 80h20v20h-20zM0 100h20v20h-20zM20 100h20v20h-20zM40 100h20v20h-20zM60 100h20v20h-20zM80 100h20v20h-20zM100 100h20v20h-20zM120 100h20v20h-20zM140 100h20v20h-20zM180 100h20v20h-20zM200 100h20v20h-20zM220 100h20v20h-20zM240 100h20v20h-20zM260 100h20v20h-20zM280 100h20v20h-20zM300 100h20v20h-20zM320 100h20v20h-20zM0 120h20v20h-20zM20 120h20v20h-20zM40 120h20v20h-20zM60 120h20v20h-20zM80 120h20v20h-20zM100 120h20v20h-20zM120 120h20v20h-20zM140 120h20v20h-20zM180 120h20v20h-20zM200 120h20v20h-20zM220 120h20v20h-20zM240 120h20v20h-20zM260 120h20v20h-20zM280 120h20v20h-20zM300 120h20v20h-20zM320 120h20v20h-20zM0 140h20v20h-20zM20 140h20v20h-20zM40 140h20v20h-20zM60 140h20v20h-20zM80 140h20v20h-20zM100 140h20v20h-20zM120 140h20v20h-20zM140 140h20v20h-20zM180 140h20v20h-20zM200 140h20v20h-20zM220 140h20v20h-20zM240 140h20v20h-20zM260 140h20v20h-20zM280 140h20v20h-20zM300 140h20v20h-20zM320 140h20v20h-20zM20 160h20v20h-20zM40 160h20v20h-20zM280 160h20v20h-20zM300 160h20v20h-20zM0 180h20v20h-20zM20 180h20v20h-20zM40 180h20v20h-20zM60 180h20v20h-20zM80 180h20v20h-20zM100 180h20v20h-20zM120 180h20v20h-20zM140 180h20v20h-20zM180 180h20v20h-20zM200 180h20v20h-20zM220 180h20v20h-20zM240 180h20v20h-20zM260 180h20v20h-20zM280 180h20v20h-20zM300 180h20v20h-20zM320 180h20v20h-20zM0 200h20v20h-20zM20 200h20v20h-20zM40 200h20v20h-20zM60 200h20v20h-20zM80 200h20v20h-20zM100 200h20v20h-20zM120 200h20v20h-20zM140 200h20v20h-20zM180 200h20v20h-20zM200 200h20v20h-20zM220 200h20v20h-20zM240 200h20v20h-20zM260 200h20v20h-20zM280 200h20v20h-20zM300 200h20v20h-20zM320 200h20v20h-20zM0 220h20v20h-20zM20 220h20v20h-20zM40 220h20v20h-20zM60 220h20v20h-20zM80 220h20v20h-20zM100 220h20v20h-20zM120 220h20v20h-20zM140 220h20v20h-20zM180 220h20v20h-20zM200 220h20v20h-20zM220 220h20v20h-20zM240 220h20v20h-20zM260 220h20v20h-20zM280 220h20v20h-20zM300 220h20v20h-20zM320 220h20v20h-20zM0 240h20v20h-20zM20 240h20v20h-20zM40 240h20v20h-20zM60 240h20v20h-20zM80 240h20v20h-20zM100 240h20v20h-20zM120 240h20v20h-20zM140 240h20v20h-20zM180 240h20v20h-20zM200 240h20v20h-20zM220 240h20v20h-20zM240 240h20v20h-20zM260 240h20v20h-20zM280 240h20v20h-20zM300 240h20v20h-20zM320 240h20v20h-20zM0 260h20v20h-20zM20 260h20v20h-20zM40 260h20v20h-20zM60 260h20v20h-20zM80 260h20v20h-20zM100 260h20v20h-20zM120 260h20v20h-20zM140 260h20v20h-20zM180 260h20v20h-20zM200 260h20v20h-20zM220 260h20v20h-20zM240 260h20v20h-20zM260 260h20v20h-20zM280 260h20v20h-20zM300 260h20v20h-20zM320 260h20v20h-20zM0 280h20v20h-20zM20 280h20v20h-20zM40 280h20v20h-20zM60 280h20v20h-20zM80 280h20v20h-20zM100 280h20v20h-20zM120 280h20v20h-20zM140 280h20v20h-20zM160 280h20v20h-20zM180 280h20v20h-20zM200 280h20v20h-20zM220 280h20v20h-20zM240 280h20v20h-20zM260 280h20v20h-20zM280 280h20v20h-20zM300 280h20v20h-20zM320 280h20v20h-20zM0 300h20v20h-20zM20 300h20v20h-20zM40 300h20v20h-20zM60 300h20v20h-20zM80 300h20v20h-20zM100 300h20v20h-20zM120 300h20v20h-20zM140 300h20v20h-20zM160 300h20v20h-20zM180 300h20v20h-20zM200 300h20v20h-20zM220 300h20v20h-20zM240 300h20v20h-20zM260 300h20v20h-20zM280 300h20v20h-20zM300 300h20v20h-20zM320 300h20v20h-20zM0 320h20v20h-20zM20 320h20v20h-20zM40 320h20v20h-20zM60 320h20v20h-20zM80 320h20v20h-20zM100 320h20v20h-20zM120 320h20v20h-20zM140 320h20v20h-20zM180 320h20v20h-20zM200 320h20v20h-20zM220 320h20v20h-20zM240 320h20v20h-20zM260 320h20v20h-20zM280 320h20v20h-20zM300 320h20v20h-20zM320 320h20v20h-20z"/></clipPath><path d="M313.8 170.1L313.8 174.7L313.6 179.0L313.4 183.1L313.1 187.2L312.6 191.1L312.1 195.0L311.5 198.9L310.8 202.7L310.1 206.5L309.2 210.2L308.2 213.9L307.2 217.5L306.0 221.1L304.8 224.6L303.5 228.1L302.1 231.5L300.6 234.9L299.0 238.2L297.3 241.5L295.6 244.7L293.8 247.9L291.8 251.0L289.9 254.1L287.8 257.1L285.6 260.0L283.4 262.8L281.1 265.6L278.7 268.4L276.3 271.0L273.8 273.6L271.2 276.1L268.5 278.6L265.8 281.0L263.0 283.3L260.1 285.5L257.2 287.6L254.2 289.7L251.2 291.7L248.1 293.6L244.9 295.4L241.7 297.2L238.4 298.8L235.1 300.4L231.7 301.9L228.3 303.3L224.8 304.6L221.2 305.9L217.7 307.0L214.0 308.1L210.4 309.0L206.6 309.9L202.9 310.7L199.1 311.4L195.2 312.0L191.3 312.5L187.3 312.9L183.3 313.2L179.1 313.5L174.9 313.6L170.3 313.6L165.6 313.6L161.4 313.5L157.2 313.2L153.2 312.9L149.2 312.5L145.3 312.0L141.4 311.4L137.6 310.7L133.9 309.9L130.1 309.0L126.5 308.1L122.8 307.0L119.3 305.9L115.7 304.6L112.2 303.3L108.8 301.9L105.4 300.4L102.1 298.8L98.8 297.2L95.6 295.4L92.4 293.6L89.3 291.7L86.3 289.7L83.3 287.6L80.4 285.5L77.5 283.3L74.7 281.0L72.0 278.6L69.3 276.1L66.7 273.6L64.2 271.0L61.8 268.4L59.4 265.6L57.1 262.8L54.9 260.0L52.7 257.1L50.6 254.1L48.7 251.0L46.7 247.9L44.9 244.7L43.2 241.5L41.5 238.2L39.9 234.9L38.4 231.5L37.0 228.1L35.7 224.6L34.5 221.1L33.3 217.5L32.3 213.9L31.3 210.2L30.4 206.5L29.7 202.7L29.0 198.9L28.4 195.0L27.9 191.1L27.4 187.2L27.1 183.1L26.9 179.0L26.7 174.7L26.7 170.1L26.7 165.5L26.9 161.2L27.1 157.1L27.4 153.0L27.9 149.1L28.4 145.2L29.0 141.3L29.7 137.5L30.4 133.7L31.3 130.0L32.3 126.3L33.3 122.7L34.5 119.1L35.7 115.6L37.0 112.1L38.4 108.7L39.9 105.3L41.5 102.0L43.2 98.7L44.9 95.5L46.7 92.3L48.7 89.2L50.6 86.1L52.7 83.1L54.9 80.2L57.1 77.4L59.4 74.6L61.8 71.8L64.2 69.2L66.7 66.6L69.3 64.1L72.0 61.6L74.7 59.2L77.5 56.9L80.4 54.7L83.3 52.6L86.3 50.5L89.3 48.5L92.4 46.6L95.6 44.8L98.8 43.0L102.1 41.4L105.4 39.8L108.8 38.3L112.2 36.9L115.7 35.6L119.3 34.3L122.8 33.2L126.5 32.1L130.1 31.2L133.9 30.3L137.6 29.5L141.4 28.8L145.3 28.2L149.2 27.7L153.2 27.3L157.2 27.0L161.4 26.7L165.6 26.6L170.2 26.5L174.9 26.6L179.1 26.7L183.3 27.0L187.3 27.3L191.3 27.7L195.2 28.2L199.1 28.8L202.9 29.5L206.6 30.3L210.4 31.2L214.0 32.1L217.7 33.2L221.2 34.3L224.8 35.6L228.3 36.9L231.7 38.3L235.1 39.8L238.4 41.4L241.7 43.0L244.9 44.8L248.1 46.6L251.2 48.5L254.2 50.5L257.2 52.6L260.1 54.7L263.0 56.9L265.8 59.2L268.5 61.6L271.2 64.1L273.8 66.6L276.3 69.2L278.7 71.8L281.1 74.6L283.4 77.4L285.6 80.2L287.8 83.1L289.9 86.1L291.8 89.2L293.8 92.3L295.6 95.5L297.3 98.7L299.0 102.0L300.6 105.3L302.1 108.7L303.5 112.1L304.8 115.6L306.0 119.1L307.2 122.7L308.2 126.3L309.2 130.0L310.1 133.7L310.8 137.5L311.5 141.3L312.1 145.2L312.6 149.1L313.1 153.0L313.4 157.1L313.6 161.2L313.8 165.5ZM286.6 170.1L286.6 174.5L286.5 178.4L286.3 182.0L286.0 185.5L285.7 188.8L285.3 192.1L284.9 195.4L284.3 198.6L283.7 201.7L283.0 204.7L282.3 207.7L281.5 210.7L280.6 213.6L279.6 216.5L278.6 219.3L277.5 222.0L276.4 224.8L275.2 227.4L273.9 230.0L272.5 232.6L271.1 235.1L269.6 237.6L268.1 240.0L266.5 242.4L264.8 244.7L263.0 246.9L261.2 249.1L259.4 251.3L257.5 253.4L255.5 255.4L253.5 257.4L251.4 259.3L249.2 261.1L247.0 262.9L244.8 264.7L242.5 266.4L240.1 268.0L237.7 269.5L235.2 271.0L232.7 272.4L230.1 273.8L227.5 275.1L224.9 276.3L222.1 277.4L219.4 278.5L216.6 279.5L213.7 280.5L210.8 281.4L207.8 282.2L204.8 282.9L201.8 283.6L198.7 284.2L195.5 284.8L192.2 285.2L188.9 285.6L185.6 285.9L182.1 286.2L178.5 286.4L174.6 286.5L170.2 286.5L165.8 286.5L161.9 286.4L158.3 286.2L154.8 285.9L151.5 285.6L148.2 285.2L144.9 284.8L141.7 284.2L138.6 283.6L135.6 282.9L132.6 282.2L129.6 281.4L126.7 280.5L123.8 279.5L121.0 278.5L118.3 277.4L115.5 276.3L112.9 275.1L110.3 273.8L107.7 272.4L105.2 271.0L102.7 269.5L100.3 268.0L97.9 266.4L95.6 264.7L93.4 262.9L91.2 261.1L89.0 259.3L86.9 257.4L84.9 255.4L82.9 253.4L81.0 251.3L79.2 249.1L77.4 246.9L75.6 244.7L73.9 242.4L72.3 240.0L70.8 237.6L69.3 235.1L67.9 232.6L66.5 230.0L65.2 227.4L64.0 224.8L62.9 222.0L61.8 219.3L60.8 216.5L59.8 213.6L58.9 210.7L58.1 207.7L57.4 204.7L56.7 201.7L56.1 198.6L55.5 195.4L55.1 192.1L54.7 188.8L54.4 185.5L54.1 182.0L53.9 178.4L53.8 174.5L53.8 170.1L53.8 165.7L53.9 161.8L54.1 158.2L54.4 154.7L54.7 151.4L55.1 148.1L55.5 144.8L56.1 141.6L56.7 138.5L57.4 135.5L58.1 132.5L58.9 129.5L59.8 126.6L60.8 123.7L61.8 120.9L62.9 118.2L64.0 115.4L65.2 112.8L66.5 110.2L67.9 107.6L69.3 105.1L70.8 102.6L72.3 100.2L73.9 97.8L75.6 95.5L77.4 93.3L79.2 91.1L81.0 88.9L82.9 86.8L84.9 84.8L86.9 82.8L89.0 80.9L91.2 79.1L93.4 77.3L95.6 75.5L97.9 73.8L100.3 72.2L102.7 70.7L105.2 69.2L107.7 67.8L110.3 66.4L112.9 65.1L115.5 63.9L118.3 62.8L121.0 61.7L123.8 60.7L126.7 59.7L129.6 58.8L132.6 58.0L135.6 57.3L138.6 56.6L141.7 56.0L144.9 55.4L148.2 55.0L151.5 54.6L154.8 54.3L158.3 54.0L161.9 53.8L165.8 53.7L170.2 53.7L174.6 53.7L178.5 53.8L182.1 54.0L185.6 54.3L188.9 54.6L192.2 55.0L195.5 55.4L198.7 56.0L201.8 56.6L204.8 57.3L207.8 58.0L210.8 58.8L213.7 59.7L216.6 60.7L219.4 61.7L222.1 62.8L224.9 63.9L227.5 65.1L230.1 66.4L232.7 67.8L235.2 69.2L237.7 70.7L240.1 72.2L242.5 73.8L244.8 75.5L247.0 77.3L249.2 79.1L251.4 80.9L253.5 82.8L255.5 84.8L257.5 86.8L259.4 88.9L261.2 91.1L263.0 93.3L264.8 95.5L266.5 97.8L268.1 100.2L269.6 102.6L271.1 105.1L272.5 107.6L273.9 110.2L275.2 112.8L276.4 115.4L277.5 118.2L278.6 120.9L279.6 123.7L280.6 126.6L281.5 129.5L282.3 132.5L283.0 135.5L283.7 138.5L284.3 141.6L284.9 144.8L285.3 148.1L285.7 151.4L286.0 154.7L286.3 158.2L286.5 161.8L286.6 165.7Z" fill="#81877f" fill-rule="evenodd" clip-path="url(#rc)" shape-rendering="crispEdges"/><rect x="0" y="0" width="1" height="340" fill="#c0c0c0"/><rect x="0" y="0" width="340" height="1" fill="#c0c0c0"/><rect x="20" y="0" width="1" height="340" fill="#c0c0c0"/><rect x="0" y="20" width="340" height="1" fill="#c0c0c0"/><rect x="40" y="0" width="1" height="340" fill="#c0c0c0"/><rect x="0" y="40" width="340" height="1" fill="#c0c0c0"/><rect x="60" y="0" width="1" height="340" fill="#c0c0c0"/><rect x="0" y="60" width="340" height="1" fill="#c0c0c0"/><rect x="80" y="0" width="1" height="340" fill="#c0c0c0"/><rect x="0" y="80" width="340" height="1" fill="#c0c0c0"/><rect x="100" y="0" width="1" height="340" fill="#c0c0c0"/><rect x="0" y="100" width="340" height="1" fill="#c0c0c0"/><rect x="120" y="0" width="1" height="340" fill="#c0c0c0"/><rect x="0" y="120" width="340" height="1" fill="#c0c0c0"/><rect x="140" y="0" width="1" height="340" fill="#c0c0c0"/><rect x="0" y="140" width="340" height="1" fill="#c0c0c0"/><rect x="160" y="0" width="1" height="340" fill="#c0c0c0"/><rect x="0" y="160" width="340" height="1" fill="#c0c0c0"/><rect x="180" y="0" width="1" height="340" fill="#c0c0c0"/><rect x="0" y="180" width="340" height="1" fill="#c0c0c0"/><rect x="200" y="0" width="1" height="340" fill="#c0c0c0"/><rect x="0" y="200" width="340" height="1" fill="#c0c0c0"/><rect x="220" y="0" width="1" height="340" fill="#c0c0c0"/><rect x="0" y="220" width="340" height="1" fill="#c0c0c0"/><rect x="240" y="0" width="1" height="340" fill="#c0c0c0"/><rect x="0" y="240" width="340" height="1" fill="#c0c0c0"/><rect x="260" y="0" width="1" height="340" fill="#c0c0c0"/><rect x="0" y="260" width="340" height="1" fill="#c0c0c0"/><rect x="280" y="0" width="1" height="340" fill="#c0c0c0"/><rect x="0" y="280" width="340" height="1" fill="#c0c0c0"/><rect x="300" y="0" width="1" height="340" fill="#c0c0c0"/><rect x="0" y="300" width="340" height="1" fill="#c0c0c0"/><rect x="320" y="0" width="1" height="340" fill="#c0c0c0"/><rect x="0" y="320" width="340" height="1" fill="#c0c0c0"/></svg>
<div style="left:744px;top:67px;width:56px;height:486px;background:#c0c0c0"></div>
<div style="left:744px;top:67px;width:1px;height:486px;background:#fff"></div>
<div style="left:744px;top:67px;width:56px;height:1px;background:#fff"></div>
<div style="left:748px;top:72px;width:49px;height:99px;background:#fff;box-shadow:inset 1px 1px 0 #808080,inset -1px -1px 0 #fff"></div>
<svg style="left:750px;top:74px" width="45" height="96" viewBox="0 0 45 96" shape-rendering="crispEdges" ><defs><linearGradient id="hue" x1="0" y1="0" x2="0" y2="1"><stop offset="0" stop-color="#ff0000"/><stop offset="0.05" stop-color="#ff0000"/><stop offset="0.2" stop-color="#ffff00"/><stop offset="0.38" stop-color="#00e000"/><stop offset="0.57" stop-color="#00e8e8"/><stop offset="0.75" stop-color="#0000ff"/><stop offset="0.92" stop-color="#ff00e0"/><stop offset="1" stop-color="#ff0070"/></linearGradient><linearGradient id="bw" x1="0" y1="0" x2="1" y2="0"><stop offset="0" stop-color="#000" stop-opacity="1"/><stop offset="0.05" stop-color="#000" stop-opacity="1"/><stop offset="0.2" stop-color="#000" stop-opacity="0.550"/><stop offset="0.5" stop-color="#000" stop-opacity="0"/><stop offset="0.55" stop-color="#fff" stop-opacity="0"/><stop offset="0.8" stop-color="#fff" stop-opacity="0.550"/><stop offset="0.97" stop-color="#fff" stop-opacity="1"/><stop offset="1" stop-color="#fff" stop-opacity="1"/></linearGradient></defs><rect width="45" height="96" fill="url(#hue)"/><rect width="45" height="96" fill="url(#bw)"/></svg>
<div style="left:748px;top:175px;width:49px;height:39px;background:#c0c0c0;box-shadow:inset 1px 1px 0 #808080,inset -1px -1px 0 #fff,inset 2px 2px 0 #fff"></div>
<div style="left:781px;top:189px;width:13px;height:22px;background:#c8c8c8;border:1px solid #000"></div>
<div style="left:752px;top:179px;width:30px;height:30px;background:#a4a8a4;border:1px solid #000"></div>
<svg style="left:753px;top:180px" width="28" height="28" viewBox="0 0 28 28" shape-rendering="crispEdges" ><path d="M7 5h7v2h-4v3h-3zM20 6h4v8h-3v3h-6v-2h3v-4h2zM6 12h8v2h-8zM8 17h9v2h-9z" fill="#8d938e"/></svg>
<div style="left:748px;top:218px;width:48px;height:45px;background:#c0c0c0;box-shadow:inset 1px 1px 0 #808080,inset -1px -1px 0 #fff"></div>
<div style="left:0px;top:552px;width:800px;height:1px;background:#fff"></div>
<div style="left:0px;top:553px;width:800px;height:20px;background:#c0c0c0"></div>
<span class="t" style="left:8px;top:557px;font-size:12px;line-height:14px;transform-origin:0 0;transform:scaleX(0.8777);">(320, 390)</span>
<div style="left:614px;top:555px;width:184px;height:17px;box-shadow:inset 1px 1px 0 #808080,inset -1px -1px 0 #fff"></div>
<span class="t" style="left:616px;top:557px;font-size:12px;line-height:14px;transform-origin:0 0;transform:scaleX(0.8820);">Image:&nbsp; 480 x 480 x 256 - 226 KBytes</span>
<div style="left:0px;top:572px;width:800px;height:28px;background:#c0c0c0"></div>
<div style="left:0px;top:573px;width:800px;height:1px;background:#fff"></div>
<div style="left:2px;top:576px;width:54px;height:22px;background:#c0c0c0;box-shadow:inset -1px -1px 0 #000,inset 1px 1px 0 #fff,inset -2px -2px 0 #808080,inset 2px 2px 0 #dfdfdf"><svg style="left:4px;top:4px" width="16" height="14" viewBox="0 0 16 14" shape-rendering="crispEdges" ><rect x="7" y="0" width="3" height="1" fill="#000"/><rect x="4" y="1" width="3" height="1" fill="#000"/><rect x="7" y="1" width="2" height="1" fill="#e01010"/><rect x="9" y="1" width="2" height="1" fill="#000"/><rect x="11" y="1" width="1" height="1" fill="#10c010"/><rect x="12" y="1" width="1" height="1" fill="#000"/><rect x="3" y="2" width="1" height="1" fill="#000"/><rect x="4" y="2" width="5" height="1" fill="#e01010"/><rect x="9" y="2" width="1" height="1" fill="#000"/><rect x="10" y="2" width="3" height="1" fill="#10c010"/><rect x="13" y="2" width="2" height="1" fill="#000"/><rect x="1" y="3" width="1" height="1" fill="#000"/><rect x="3" y="3" width="1" height="1" fill="#000"/><rect x="4" y="3" width="5" height="1" fill="#e01010"/><rect x="9" y="3" width="1" height="1" fill="#000"/><rect x="10" y="3" width="4" height="1" fill="#10c010"/><rect x="14" y="3" width="1" height="1" fill="#000"/><rect x="3" y="4" width="1" height="1" fill="#000"/><rect x="4" y="4" width="5" height="1" fill="#e01010"/><rect x="9" y="4" width="1" height="1" fill="#000"/><rect x="10" y="4" width="4" height="1" fill="#10c010"/><rect x="14" y="4" width="1" height="1" fill="#000"/><rect x="0" y="5" width="1" height="1" fill="#e01010"/><rect x="2" y="5" width="2" height="1" fill="#000"/><rect x="4" y="5" width="4" height="1" fill="#e01010"/><rect x="8" y="5" width="2" height="1" fill="#000"/><rect x="10" y="5" width="4" height="1" fill="#10c010"/><rect x="14" y="5" width="1" height="1" fill="#000"/><rect x="3" y="6" width="12" height="1" fill="#000"/><rect x="0" y="7" width="1" height="1" fill="#e01010"/><rect x="2" y="7" width="1" height="1" fill="#000"/><rect x="4" y="7" width="1" height="1" fill="#000"/><rect x="5" y="7" width="4" height="1" fill="#1010e0"/><rect x="9" y="7" width="1" height="1" fill="#000"/><rect x="10" y="7" width="4" height="1" fill="#f0f000"/><rect x="14" y="7" width="1" height="1" fill="#000"/><rect x="4" y="8" width="1" height="1" fill="#000"/><rect x="5" y="8" width="4" height="1" fill="#1010e0"/><rect x="9" y="8" width="1" height="1" fill="#000"/><rect x="10" y="8" width="4" height="1" fill="#f0f000"/><rect x="14" y="8" width="1" height="1" fill="#000"/><rect x="0" y="9" width="1" height="1" fill="#1010e0"/><rect x="2" y="9" width="1" height="1" fill="#000"/><rect x="4" y="9" width="1" height="1" fill="#000"/><rect x="5" y="9" width="4" height="1" fill="#1010e0"/><rect x="9" y="9" width="1" height="1" fill="#000"/><rect x="10" y="9" width="4" height="1" fill="#f0f000"/><rect x="14" y="9" width="1" height="1" fill="#000"/><rect x="4" y="10" width="1" height="1" fill="#000"/><rect x="5" y="10" width="3" height="1" fill="#1010e0"/><rect x="8" y="10" width="3" height="1" fill="#000"/><rect x="11" y="10" width="3" height="1" fill="#f0f000"/><rect x="14" y="10" width="1" height="1" fill="#000"/><rect x="0" y="11" width="1" height="1" fill="#1010e0"/><rect x="2" y="11" width="1" height="1" fill="#000"/><rect x="4" y="11" width="1" height="1" fill="#000"/><rect x="5" y="11" width="1" height="1" fill="#1010e0"/><rect x="6" y="11" width="2" height="1" fill="#000"/><rect x="11" y="11" width="2" height="1" fill="#000"/><rect x="13" y="11" width="1" height="1" fill="#f0f000"/><rect x="14" y="11" width="1" height="1" fill="#000"/><rect x="4" y="12" width="2" height="1" fill="#000"/><rect x="13" y="12" width="2" height="1" fill="#000"/></svg><span class="t" style="left:22px;top:4px;font-size:12px;line-height:14px;font-weight:bold;transform-origin:0 0;transform:scaleX(0.9874);">Start</span></div>
<div style="left:58px;top:576px;width:1px;height:22px;background:#808080"></div><div style="left:59px;top:576px;width:1px;height:22px;background:#fff"></div>
<div style="left:62px;top:578px;width:3px;height:18px;background:#c0c0c0;box-shadow:inset 1px 1px 0 #fff,inset -1px -1px 0 #808080"></div>
<svg style="left:72px;top:579px" width="16" height="16" viewBox="0 0 16 16" shape-rendering="crispEdges" ><rect x="0" y="1" width="16" height="14" fill="#1080c0"/><path d="M0 1h3l-3 3zM16 15h-3l3-3z" fill="#80e0ff" shape-rendering="auto"/><path d="M3 9l7-5l3 4l-7 5z" fill="#fff" stroke="#404040" stroke-width="1" shape-rendering="auto"/><path d="M8 7l6-6" stroke="#e0a040" stroke-width="2.200" shape-rendering="auto"/><path d="M5 10l2-1" stroke="#000" shape-rendering="auto"/></svg><svg style="left:95px;top:579px" width="17" height="17" viewBox="0 0 17 17" shape-rendering="crispEdges" ><circle cx="8" cy="8" r="7.300" fill="#ffe820" stroke="#000" stroke-width="1.400" shape-rendering="auto"/><rect x="5" y="5" width="2" height="2" fill="#000"/><rect x="10" y="5" width="2" height="2" fill="#000"/><path d="M4 9.500c2 3 6 3 8 0" fill="none" stroke="#000" stroke-width="1.200" shape-rendering="auto"/><rect x="7" y="11" width="3" height="3" fill="#e02020"/></svg><svg style="left:120px;top:582px" width="14" height="12" viewBox="0 0 14 12" shape-rendering="crispEdges" ><rect x="0.5" y="0.5" width="8" height="6" fill="#fff" stroke="#000"/><rect x="1" y="1" width="7" height="1" fill="#40c0c0"/><rect x="1.500" y="2.500" width="9" height="7" fill="#fff" stroke="#000"/><rect x="2" y="3" width="8" height="2" fill="#40d0d0"/><path d="M11.500 7.500l2 1.500l-2 1.500z" fill="#808080"/></svg><svg style="left:141px;top:579px" width="16" height="16" viewBox="0 0 16 16" shape-rendering="crispEdges" ><rect width="16" height="16" fill="#fff"/><rect y="2" width="16" height="1" fill="#c0c0ff"/><path d="M0 13v-4l3-4l3 4l2-2l3-3l3 4l2 2v3z" fill="#802090" shape-rendering="auto"/><rect y="13" width="16" height="2" fill="#20b0b0"/><rect y="15" width="16" height="1" fill="#404080"/></svg><svg style="left:164px;top:579px" width="16" height="16" viewBox="0 0 16 16" shape-rendering="crispEdges" ><rect width="16" height="16" fill="#181820"/><path d="M3 2h5l3 2h3v5l-2 3h-7l-3-3v-4z" fill="#2838a0" shape-rendering="auto"/><path d="M10 1h5v3z" fill="#e0d040"/><path d="M0 11h4v4h-4z" fill="#e8e8e8"/><path d="M5 6h2v2h-2zM9 6h2v2h-2z" fill="#607030"/><path d="M12 10h3v5h-3z" fill="#c0c040"/></svg><svg style="left:187px;top:579px" width="17" height="16" viewBox="0 0 17 16" shape-rendering="crispEdges" ><rect width="17" height="16" fill="#f0e040"/><circle cx="8.500" cy="8" r="5.800" fill="#e0e0e0" stroke="#000" stroke-width="2" shape-rendering="auto"/><path d="M8.500 3v10M5 6h7M5 10h7M6.500 4v8M10.500 4v8" stroke="#404040" shape-rendering="auto"/></svg><svg style="left:210px;top:579px" width="16" height="16" viewBox="0 0 16 16" shape-rendering="crispEdges" ><rect x="0.5" y="0.5" width="15" height="15" fill="#102068" stroke="#000"/><rect x="1" y="11" width="14" height="4" fill="#000"/><rect x="1" y="10" width="14" height="1" fill="#40a0a0"/></svg><span class="t" style="left:213px;top:579px;font-family:'Liberation Serif',serif;font-weight:bold;font-size:13px;line-height:13px;color:#fff">N</span><svg style="left:233px;top:579px" width="16" height="16" viewBox="0 0 16 16" shape-rendering="auto" ><ellipse cx="8" cy="3.200" rx="1.700" ry="3" fill="#20a020" stroke="#000" stroke-width="0.800" transform="rotate(0 8 8)"/><ellipse cx="8" cy="3.200" rx="1.700" ry="3" fill="#20a020" stroke="#000" stroke-width="0.800" transform="rotate(45 8 8)"/><ellipse cx="8" cy="3.200" rx="1.700" ry="3" fill="#e02020" stroke="#000" stroke-width="0.800" transform="rotate(90 8 8)"/><ellipse cx="8" cy="3.200" rx="1.700" ry="3" fill="#20a020" stroke="#000" stroke-width="0.800" transform="rotate(135 8 8)"/><ellipse cx="8" cy="3.200" rx="1.700" ry="3" fill="#20a020" stroke="#000" stroke-width="0.800" transform="rotate(180 8 8)"/><ellipse cx="8" cy="3.200" rx="1.700" ry="3" fill="#e0a020" stroke="#000" stroke-width="0.800" transform="rotate(225 8 8)"/><ellipse cx="8" cy="3.200" rx="1.700" ry="3" fill="#20a020" stroke="#000" stroke-width="0.800" transform="rotate(270 8 8)"/><ellipse cx="8" cy="3.200" rx="1.700" ry="3" fill="#c02020" stroke="#000" stroke-width="0.800" transform="rotate(315 8 8)"/><circle cx="8" cy="8" r="2" fill="#e0c020" stroke="#000" stroke-width="0.600"/></svg><svg style="left:256px;top:579px" width="16" height="17" viewBox="0 0 16 17" shape-rendering="crispEdges" ><path d="M4 6h10v9h-10z" fill="#fff" stroke="#000" stroke-width="1" shape-rendering="auto"/><path d="M4 1h11l-3 8h-11z" fill="#10c020" stroke="#006000" stroke-width="1" shape-rendering="auto"/><path d="M6 3h7" stroke="#80ff80" shape-rendering="auto"/><path d="M6 12h6M6 14h6" stroke="#a0a0a0"/></svg>
<div style="left:283px;top:576px;width:1px;height:22px;background:#808080"></div><div style="left:284px;top:576px;width:1px;height:22px;background:#fff"></div>
<div style="left:286px;top:578px;width:3px;height:18px;background:#c0c0c0;box-shadow:inset 1px 1px 0 #fff,inset -1px -1px 0 #808080"></div>
<div style="left:293px;top:576px;width:160px;height:22px;background:#c0c0c0;box-shadow:inset -1px -1px 0 #000,inset 1px 1px 0 #fff,inset -2px -2px 0 #808080,inset 2px 2px 0 #dfdfdf"><svg style="left:4px;top:3px" width="17" height="16" viewBox="0 0 17 16" shape-rendering="crispEdges" ><path d="M0.500 3.500h5l1 1h7v9h-13z" fill="#ffe070" stroke="#806000" shape-rendering="auto"/><circle cx="7" cy="7" r="4" fill="#c0f0ff" stroke="#2040a0" stroke-width="1.500" shape-rendering="auto"/><path d="M10 10l5 5" stroke="#2040c0" stroke-width="2.400" shape-rendering="auto"/></svg><span class="t" style="left:23px;top:4px;font-size:12px;line-height:14px;transform-origin:0 0;transform:scaleX(0.8783);">Exploring - TeamDeath</span></div>
<div style="left:456px;top:576px;width:161px;height:22px;background:#e0e0e0;box-shadow:inset 1px 1px 0 #000,inset -1px -1px 0 #fff,inset 2px 2px 0 #808080,inset -2px -2px 0 #dfdfdf"><div style="left:2px;top:2px;width:157px;height:18px;background-color:#fff;background-image:linear-gradient(45deg,#c0c0c0 25%,transparent 25%,transparent 75%,#c0c0c0 75%),linear-gradient(45deg,#c0c0c0 25%,transparent 25%,transparent 75%,#c0c0c0 75%);background-size:2px 2px;background-position:0 0,1px 1px"></div><svg style="left:3px;top:3px" width="18" height="17" viewBox="0 0 18 17" shape-rendering="crispEdges" ><g shape-rendering="auto"><ellipse cx="9" cy="8.300" rx="7.200" ry="5.400" fill="#8a4416"/><circle cx="8.500" cy="4" r="1.700" fill="#d8d890"/><circle cx="11.500" cy="4.500" r="1.600" fill="#708828"/><circle cx="14.200" cy="6.500" r="1.400" fill="#3028a0"/><circle cx="13.800" cy="9.300" r="1.500" fill="#e87030"/><circle cx="11.300" cy="11.500" r="1.500" fill="#f0a040"/><circle cx="8" cy="11.800" r="1.400" fill="#f0dce0"/><circle cx="5" cy="9.500" r="1.600" fill="#c89878"/><circle cx="4.500" cy="6.500" r="1.300" fill="#a07020"/><path d="M2 1L11 9.500" stroke="#000" stroke-width="1.800"/><path d="M3 1.500L11.500 9.500" stroke="#fff" stroke-width="0.900" stroke-dasharray="1.200 1.200"/></g><rect x="14" y="12" width="3" height="1" fill="#000"/><rect x="14" y="13" width="1" height="1" fill="#000"/><rect x="14" y="14" width="2" height="1" fill="#000"/><rect x="16" y="15" width="1" height="1" fill="#000"/><rect x="14" y="16" width="2" height="1" fill="#000"/></svg><span class="t" style="left:23px;top:5px;font-size:12px;line-height:14px;font-weight:bold;transform-origin:0 0;transform:scaleX(0.9978);">Paint Shop Pro - 8x8x...</span></div>
<div style="left:647px;top:576px;width:151px;height:22px;background:#c0c0c0;box-shadow:inset 1px 1px 0 #808080,inset -1px -1px 0 #fff"></div>
<svg style="left:651px;top:578px" width="18" height="18" viewBox="0 0 18 18" shape-rendering="crispEdges" ><g shape-rendering="auto"><path d="M1 8.500L9.500 1L10 16.500Z" fill="#e4dc68" stroke="#585800" stroke-width="1"/><path d="M10 3v12" stroke="#303030" stroke-width="1.200"/><path d="M2.500 8.500L9 3" stroke="#ffffc0" stroke-width="1"/><path d="M13 5.500l3-1.500M13 9h3M13 12.500l3 1.500" stroke="#909090" stroke-width="1"/></g></svg><svg style="left:669px;top:581px" width="17" height="13" viewBox="0 0 17 13" shape-rendering="crispEdges" ><rect x="0.5" y="0.5" width="16" height="12" fill="#808080" stroke="#000"/><rect x="2" y="2" width="13" height="9" fill="#a0a8a0"/><rect x="4" y="4" width="3" height="5" fill="#20a020"/><rect x="8" y="4" width="2" height="5" fill="#806020"/><rect x="11" y="3" width="3" height="7" fill="#404040"/></svg><svg style="left:686px;top:579px" width="16" height="17" viewBox="0 0 16 17" shape-rendering="crispEdges" ><path d="M4 6h10v9h-10z" fill="#fff" stroke="#000" stroke-width="1" shape-rendering="auto"/><path d="M4 1h11l-3 8h-11z" fill="#10c020" stroke="#006000" stroke-width="1" shape-rendering="auto"/><path d="M6 3h7" stroke="#80ff80" shape-rendering="auto"/><path d="M6 12h6M6 14h6" stroke="#a0a0a0"/></svg><svg style="left:703px;top:580px" width="16" height="16" viewBox="0 0 16 16" shape-rendering="auto" ><ellipse cx="8" cy="3.200" rx="1.700" ry="3" fill="#fff" stroke="#000" stroke-width="0.900" transform="rotate(0 8 8)"/><ellipse cx="8" cy="3.200" rx="1.700" ry="3" fill="#fff" stroke="#000" stroke-width="0.900" transform="rotate(45 8 8)"/><ellipse cx="8" cy="3.200" rx="1.700" ry="3" fill="#fff" stroke="#000" stroke-width="0.900" transform="rotate(90 8 8)"/><ellipse cx="8" cy="3.200" rx="1.700" ry="3" fill="#20c020" stroke="#000" stroke-width="0.900" transform="rotate(135 8 8)"/><ellipse cx="8" cy="3.200" rx="1.700" ry="3" fill="#fff" stroke="#000" stroke-width="0.900" transform="rotate(180 8 8)"/><ellipse cx="8" cy="3.200" rx="1.700" ry="3" fill="#20c020" stroke="#000" stroke-width="0.900" transform="rotate(225 8 8)"/><ellipse cx="8" cy="3.200" rx="1.700" ry="3" fill="#fff" stroke="#000" stroke-width="0.900" transform="rotate(270 8 8)"/><ellipse cx="8" cy="3.200" rx="1.700" ry="3" fill="#fff" stroke="#000" stroke-width="0.900" transform="rotate(315 8 8)"/><circle cx="8" cy="8" r="2.400" fill="#000"/></svg><svg style="left:720px;top:578px" width="16" height="18" viewBox="0 0 16 18" shape-rendering="crispEdges" ><ellipse cx="8" cy="4" rx="6" ry="2.500" fill="#f0f0a0" stroke="#909060" stroke-dasharray="2 1" shape-rendering="auto"/><rect x="0.5" y="7.500" width="15" height="9" fill="#505860" stroke="#000"/><rect x="2" y="6" width="4" height="2" fill="#303030"/><circle cx="8" cy="12" r="3" fill="#20c8e8" stroke="#000" stroke-width="0.800" shape-rendering="auto"/></svg>
<span class="t" style="left:748px;top:580px;font-size:12px;line-height:14px;transform-origin:0 0;transform:scaleX(0.8954);">2:25 PM</span>
<div style="left:521px;top:199px;width:273px;height:366px;background:#c0c0c0;box-shadow:inset -1px -1px 0 #000,inset 1px 1px 0 #dfdfdf,inset -2px -2px 0 #808080,inset 2px 2px 0 #fff"></div>
<div style="left:524px;top:202px;width:267px;height:18px;background:linear-gradient(to right,#000080 0,#000080 8%,#1084d0 100%)"></div>
<span class="t" style="left:527px;top:204px;font-size:12px;line-height:14px;font-weight:bold;transform-origin:0 0;transform:scaleX(0.9517);color:#fff">Flood Fill Options</span>
<div style="left:773px;top:204px;width:16px;height:14px;background:#c0c0c0;box-shadow:inset -1px -1px 0 #000,inset 1px 1px 0 #fff,inset -2px -2px 0 #808080,inset 2px 2px 0 #dfdfdf"><svg style="left:4px;top:3px" width="8" height="7" viewBox="0 0 8 7" shape-rendering="crispEdges" ><path d="M0 0h2v1h-2zM6 0h2v1h-2zM1 1h2v1h-2zM5 1h2v1h-2zM2 2h4v1h-4zM3 3h2v1h-2zM2 4h4v1h-4zM1 5h2v1h-2zM5 5h2v1h-2zM0 6h2v1h-2zM6 6h2v1h-2z" fill="#000"/></svg></div>
<span class="t" style="left:565px;top:236px;font-size:12px;line-height:14px;transform-origin:0 0;transform:scaleX(0.8218);">Fill Style:</span>
<div style="left:614px;top:232px;width:149px;height:21px;background:#fff;box-shadow:inset -1px -1px 0 #fff,inset 1px 1px 0 #808080,inset -2px -2px 0 #dfdfdf,inset 2px 2px 0 #000"></div><div style="left:745px;top:234px;width:16px;height:17px;background:#c0c0c0;box-shadow:inset -1px -1px 0 #000,inset 1px 1px 0 #fff,inset -2px -2px 0 #808080,inset 2px 2px 0 #dfdfdf"><svg style="left:4px;top:6px" width="7" height="4" viewBox="0 0 7 4" shape-rendering="crispEdges" ><path d="M0 0h7v1h-7zM1 1h5v1h-5zM2 2h3v1h-3zM3 3h1v1h-1z" fill="#000"/></svg></div><span class="t" style="left:619px;top:236px;font-size:12px;line-height:14px;transform-origin:0 0;transform:scaleX(0.9051);">Pattern</span>
<span class="t" style="left:570px;top:271px;font-size:12px;line-height:14px;transform-origin:0 0;transform:scaleX(0.8759);">Blend Mode:</span>
<div style="left:634px;top:267px;width:117px;height:21px;background:#fff;box-shadow:inset -1px -1px 0 #fff,inset 1px 1px 0 #808080,inset -2px -2px 0 #dfdfdf,inset 2px 2px 0 #000"></div><div style="left:733px;top:269px;width:16px;height:17px;background:#c0c0c0;box-shadow:inset -1px -1px 0 #000,inset 1px 1px 0 #fff,inset -2px -2px 0 #808080,inset 2px 2px 0 #dfdfdf"><svg style="left:4px;top:6px" width="7" height="4" viewBox="0 0 7 4" shape-rendering="crispEdges" ><path d="M0 0h7v1h-7zM1 1h5v1h-5zM2 2h3v1h-3zM3 3h1v1h-1z" fill="#000"/></svg></div><span class="t" style="left:639px;top:271px;font-size:12px;line-height:14px;transform-origin:0 0;transform:scaleX(0.8788);">Normal</span>
<span class="t" style="left:559px;top:294px;font-size:12px;line-height:14px;transform-origin:0 0;transform:scaleX(0.8942);"><u>N</u>ew pattern source:</span>
<div style="left:559px;top:311px;width:197px;height:21px;background:#fff;box-shadow:inset -1px -1px 0 #fff,inset 1px 1px 0 #808080,inset -2px -2px 0 #dfdfdf,inset 2px 2px 0 #000"></div><div style="left:738px;top:313px;width:16px;height:17px;background:#c0c0c0;box-shadow:inset -1px -1px 0 #000,inset 1px 1px 0 #fff,inset -2px -2px 0 #808080,inset 2px 2px 0 #dfdfdf"><svg style="left:4px;top:6px" width="7" height="4" viewBox="0 0 7 4" shape-rendering="crispEdges" ><path d="M0 0h7v1h-7zM1 1h5v1h-5zM2 2h3v1h-3zM3 3h1v1h-1z" fill="#000"/></svg></div><div style="left:562px;top:314px;width:175px;height:15px;background:#000080;outline:1px dotted #ffff80;outline-offset:-1px"></div><span class="t" style="left:563px;top:315px;font-size:12px;line-height:14px;transform-origin:0 0;transform:scaleX(0.8798);color:#fff">8x8x60x480.gif</span>
<svg style="left:598px;top:351px" width="120" height="130" viewBox="0 0 120 130" shape-rendering="crispEdges" ><rect x="0.5" y="0.5" width="119" height="129" fill="#fff" stroke="#000"/><rect x="2" y="7" width="116" height="116" fill="#000"/><rect x="16" y="7" width="15" height="14" fill="#404040"/><rect x="46" y="7" width="14" height="14" fill="#404040"/><rect x="74" y="7" width="15" height="14" fill="#404040"/><rect x="104" y="7" width="14" height="14" fill="#404040"/><rect x="2" y="21" width="14" height="15" fill="#404040"/><rect x="31" y="21" width="15" height="15" fill="#404040"/><rect x="60" y="21" width="14" height="15" fill="#404040"/><rect x="89" y="21" width="15" height="15" fill="#404040"/><rect x="16" y="36" width="15" height="15" fill="#404040"/><rect x="46" y="36" width="14" height="15" fill="#404040"/><rect x="74" y="36" width="15" height="15" fill="#404040"/><rect x="104" y="36" width="14" height="15" fill="#404040"/><rect x="2" y="51" width="14" height="14" fill="#404040"/><rect x="31" y="51" width="15" height="14" fill="#404040"/><rect x="60" y="51" width="14" height="14" fill="#404040"/><rect x="89" y="51" width="15" height="14" fill="#404040"/><rect x="16" y="65" width="15" height="14" fill="#404040"/><rect x="46" y="65" width="14" height="14" fill="#404040"/><rect x="74" y="65" width="15" height="14" fill="#404040"/><rect x="104" y="65" width="14" height="14" fill="#404040"/><rect x="2" y="79" width="14" height="15" fill="#404040"/><rect x="31" y="79" width="15" height="15" fill="#404040"/><rect x="60" y="79" width="14" height="15" fill="#404040"/><rect x="89" y="79" width="15" height="15" fill="#404040"/><rect x="16" y="94" width="15" height="15" fill="#404040"/><rect x="46" y="94" width="14" height="15" fill="#404040"/><rect x="74" y="94" width="15" height="15" fill="#404040"/><rect x="104" y="94" width="14" height="15" fill="#404040"/><rect x="2" y="109" width="14" height="14" fill="#404040"/><rect x="31" y="109" width="15" height="14" fill="#404040"/><rect x="60" y="109" width="14" height="14" fill="#404040"/><rect x="89" y="109" width="15" height="14" fill="#404040"/></svg>
<div style="left:535px;top:528px;width:75px;height:23px;background:#000"></div><div style="left:536px;top:529px;width:73px;height:21px;background:#c0c0c0;box-shadow:inset -1px -1px 0 #000,inset 1px 1px 0 #fff,inset -2px -2px 0 #808080,inset 2px 2px 0 #dfdfdf"></div><span class="t" style="left:565.0px;top:532px;font-size:12px;line-height:14px;transform-origin:0 0;transform:scaleX(0.8656);">OK</span>
<div style="left:620px;top:528px;width:75px;height:23px;background:#c0c0c0;box-shadow:inset -1px -1px 0 #000,inset 1px 1px 0 #fff,inset -2px -2px 0 #808080,inset 2px 2px 0 #dfdfdf"></div><span class="t" style="left:641.0px;top:532px;font-size:12px;line-height:14px;transform-origin:0 0;transform:scaleX(0.8833);">Cancel</span>
<div style="left:706px;top:528px;width:75px;height:23px;background:#c0c0c0;box-shadow:inset -1px -1px 0 #000,inset 1px 1px 0 #fff,inset -2px -2px 0 #808080,inset 2px 2px 0 #dfdfdf"></div><span class="t" style="left:732.5px;top:532px;font-size:12px;line-height:14px;transform-origin:0 0;transform:scaleX(0.8911);"><u>H</u>elp</span>
</body></html>
